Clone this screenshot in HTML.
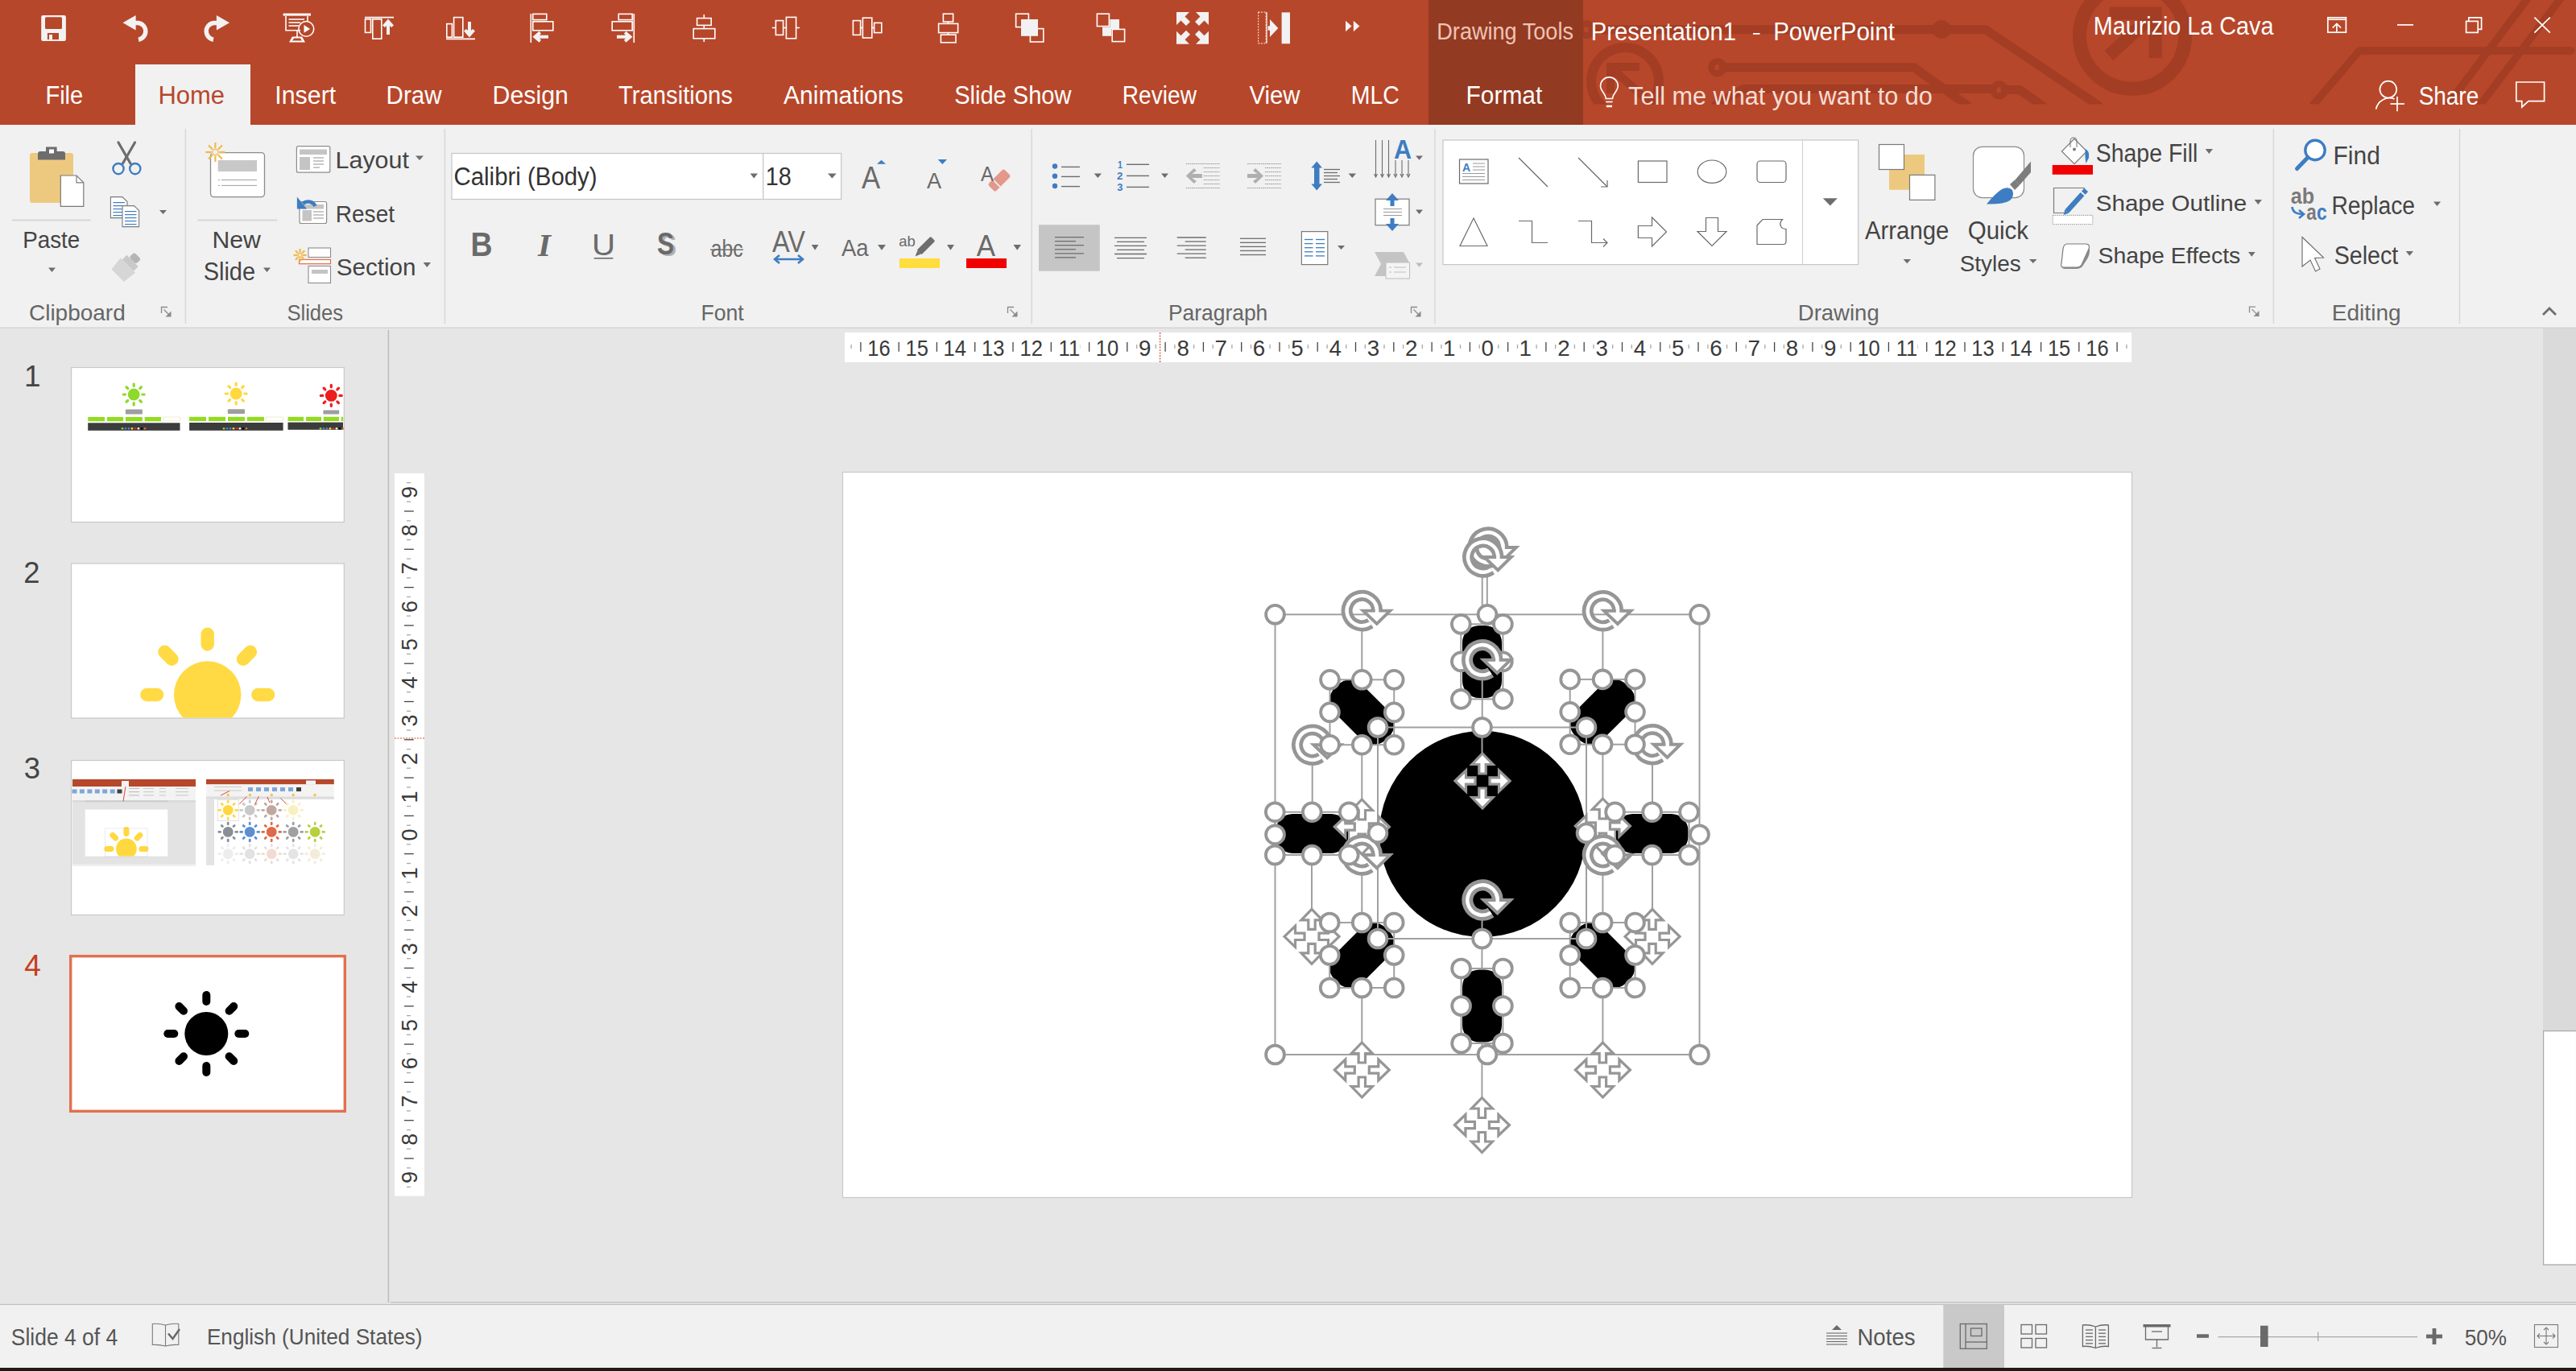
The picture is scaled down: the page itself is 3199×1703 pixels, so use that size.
<!DOCTYPE html>
<html><head><meta charset="utf-8"><style>
html,body{margin:0;padding:0;width:3199px;height:1703px;overflow:hidden;background:#E6E6E6;}
svg{display:block;font-family:"Liberation Sans",sans-serif;}
</style></head><body>
<svg width="3199" height="1703" viewBox="0 0 3199 1703">
<rect x="0" y="0" width="3199" height="1703" fill="#E6E6E6"/>
<rect x="0" y="0" width="3199" height="155" fill="#B7472A"/>
<rect x="1774" y="0" width="192" height="155" fill="#933A22"/>
<rect x="0" y="155" width="3199" height="252" fill="#F1F1F1"/>
<rect x="0" y="406.5" width="3199" height="1.5" fill="#D4D4D4"/>
<rect x="168" y="80" width="143" height="76" fill="#F1F1F1"/>
<rect x="485" y="1617" width="2714" height="1.2" fill="#BDBDBD"/>
<rect x="0" y="1619.8" width="3199" height="1.3" fill="#C0C0C0"/>
<rect x="0" y="1621" width="3199" height="79" fill="#F1F1F1"/>
<rect x="0" y="1699" width="3199" height="4" fill="#1E1B17"/>
<rect x="481.6" y="410" width="1.6" height="1208" fill="#BDBDBD"/>
<defs><clipPath id="tbclip"><rect x="1966" y="0" width="1233" height="129.5"/></clipPath></defs>
<g clip-path="url(#tbclip)" fill="none" stroke="#A33D24" stroke-width="11" stroke-linejoin="round" stroke-linecap="round">
<circle cx="2018" cy="101" r="42" stroke-width="12"/>
<polyline points="2036,83 2000,83 2000,116" stroke-width="10" stroke-linejoin="miter" stroke-linecap="butt"/>
<line x1="2004" y1="87" x2="2052" y2="130" stroke-width="10"/>
<polyline points="1978,36.7 2466,36.7 2606,131"/>
<circle cx="1970" cy="36.7" r="7.5" stroke-width="8"/>
<circle cx="2411" cy="36.4" r="7.5" stroke-width="8"/>
<polyline points="2140,83.7 2376.7,83.7 2443,131"/>
<circle cx="2132.8" cy="83.7" r="7.5" stroke-width="8"/>
<polyline points="2130,131 2165,110.5 2474,110.5"/>
<polyline points="2490,111.5 2508,111.5 2536,131"/>
<circle cx="2482.8" cy="111.8" r="7.5" stroke-width="8"/>
<circle cx="2648" cy="44.8" r="65.5" stroke-width="17"/>
<polyline points="2619.7,16.4 2676.7,16.4 2676.7,72.2" stroke-width="16" stroke-linejoin="miter" stroke-linecap="butt"/>
<line x1="2619" y1="69" x2="2670" y2="22" stroke-width="16" stroke-linecap="butt"/>
<polyline points="3193,63 2930,63 2872,131" stroke-width="9.5"/>
<line x1="3139" y1="-2" x2="3039" y2="131" stroke-width="9.5"/><line x1="3180" y1="-2" x2="3079.6" y2="131" stroke-width="9.5"/>
</g>
<g fill="none" stroke="#FFFFFF" stroke-width="1.6">
<line x1="453" y1="21.6" x2="489" y2="21.6"/>
<rect x="453.5" y="23.8" width="7" height="16.6"/><rect x="462.8" y="23.8" width="11" height="24.4"/>
<line x1="554" y1="48.4" x2="590" y2="48.4"/>
<rect x="554.8" y="29.6" width="6.6" height="16.6"/><rect x="563.6" y="21.6" width="11.2" height="24.6"/>
<line x1="659.3" y1="17" x2="659.3" y2="53"/>
<rect x="661.8" y="17.4" width="17" height="7.2"/><rect x="661.8" y="26.8" width="25" height="11"/>
<line x1="787.3" y1="17" x2="787.3" y2="53"/>
<rect x="768.2" y="17.4" width="17" height="7.2"/><rect x="760.2" y="26.8" width="25" height="11"/>
<line x1="874.3" y1="18" x2="874.3" y2="52"/>
<rect x="865.6" y="22.6" width="17.6" height="8.8" fill="#B7472A"/><rect x="861.2" y="35.6" width="26.6" height="12.2" fill="#B7472A"/>
<line x1="958.8" y1="34.5" x2="993" y2="34.5"/>
<rect x="963.4" y="25.6" width="9.2" height="17.8" fill="#B7472A"/><rect x="976.4" y="21.4" width="12.2" height="26.4" fill="#B7472A"/>
<line x1="1068.6" y1="34.5" x2="1071.2" y2="34.5"/><line x1="1083" y1="34.5" x2="1085.5" y2="34.5"/>
<rect x="1059.4" y="25.6" width="9.2" height="17.8"/><rect x="1071.4" y="22.2" width="11.4" height="24.8"/><rect x="1085.6" y="28.4" width="9.2" height="12.2"/>
<line x1="1177.5" y1="27" x2="1177.5" y2="29.3"/><line x1="1177.5" y1="40.7" x2="1177.5" y2="43"/>
<rect x="1171.4" y="17.2" width="12.2" height="9.8"/><rect x="1165.6" y="29.4" width="24" height="11.2"/><rect x="1168.4" y="43.2" width="18.6" height="9.6"/>
<rect x="1261.6" y="17.2" width="15.8" height="16.4"/><rect x="1279.4" y="35.6" width="16.4" height="16.4"/>
</g>
<rect x="1268" y="24" width="21" height="20.8" fill="#F2F2F2"/>
<g fill="none" stroke="#FFFFFF" stroke-width="1.6"><rect x="1362.4" y="17.2" width="15" height="15.4"/><rect x="1381.2" y="36.4" width="15.4" height="15.2"/></g>
<rect x="1378.4" y="24" width="11.6" height="12.2" fill="#F2F2F2"/><rect x="1369" y="33.6" width="11" height="11.2" fill="#F2F2F2"/>
<g fill="#F2F2F2">
<polygon points="482,23.4 489,31.5 486,34 484,32 484,43 480,43 480,32 478,34 475,31.5"/>
<polygon points="582.9,46.6 590,38.5 587,36 585,38 585,27 581,27 581,38 579,36 576,38.5"/>
<polygon points="661.4,45.7 669.5,38.7 672,41.7 670,43.7 681,43.7 681,47.7 670,47.7 672,49.7 669.5,52.7"/>
<polygon points="785.5,45.7 777.4,38.7 774.9,41.7 776.9,43.7 766,43.7 766,47.7 776.9,47.7 774.9,49.7 777.4,52.7"/>
<polygon points="1461,15 1477,15 1471.5,20.5 1478,27 1473,32 1466.5,25.5 1461,31"/>
<polygon points="1501,15 1485,15 1490.5,20.5 1484,27 1489,32 1495.5,25.5 1501,31"/>
<polygon points="1461,54.8 1477,54.8 1471.5,49.3 1478,42.8 1473,37.8 1466.5,44.3 1461,38.8"/>
<polygon points="1501,54.8 1485,54.8 1490.5,49.3 1484,42.8 1489,37.8 1495.5,44.3 1501,38.8"/>
<rect x="1591.6" y="15.4" width="10.4" height="38.9"/>
<polygon points="1577,24.1 1587.3,35 1577,45.9 1577,37.7 1574.6,37.7 1574.6,32.3 1577,32.3"/>
<polygon points="1671,25.8 1678.6,32.5 1671,39.3"/><polygon points="1680.8,25.8 1688.4,32.5 1680.8,39.3"/>
</g>
<g fill="none" stroke="#FFFFFF" stroke-width="1.2"><rect x="1562.6" y="15.2" width="9.6" height="38.6" stroke-dasharray="2 1.5" stroke="#F5D0C4"/><line x1="1573" y1="15" x2="1573" y2="54"/></g>
<rect x="51.2" y="19" width="30.7" height="32" rx="2.2" fill="#F2F2F2"/>
<rect x="56" y="21.2" width="21" height="14.7" rx="1.5" fill="#B7472A"/>
<rect x="58.9" y="41" width="14.1" height="8.1" fill="#B7472A"/><rect x="61" y="43" width="4" height="6.1" fill="#F2F2F2"/>
<g fill="none" stroke="#F2F2F2" stroke-width="5.5">
<path d="M158 28.4 H171.5 A10.5 10.5 0 0 1 172 49.2"/>
<path d="M279 28.4 H265.5 A10.5 10.5 0 0 0 265 49.2"/>
</g>
<g fill="#F2F2F2"><polygon points="152.5,28.3 168.6,19 168.6,37.6"/><polygon points="285,28.3 268.9,19 268.9,37.6"/></g>
<g fill="none" stroke="#FFFFFF" stroke-width="1.6">
<rect x="351.6" y="16.6" width="34.4" height="3" fill="#FFFFFF" stroke="none"/>
<polyline points="355,20 355,37.8 373,37.8"/><line x1="382" y1="20" x2="382" y2="26"/>
<line x1="358.5" y1="24" x2="378" y2="24"/><line x1="358.5" y1="28" x2="373" y2="28"/><line x1="358.5" y1="32" x2="371" y2="32"/>
<circle cx="380.3" cy="35.9" r="9.4"/>
<line x1="369" y1="38" x2="369" y2="46"/>
</g>
<polygon points="377.5,31 385,35.9 377.5,40.8" fill="#FFFFFF"/>
<polygon points="363,45.6 375,45.6 379,52.6 359,52.6" fill="#FFFFFF"/><polygon points="365,47.5 373,47.5 375,50.6 363,50.6" fill="#B7472A"/>
<g fill="none" stroke="#FFFFFF" stroke-width="1.7">
<rect x="2890.8" y="21.8" width="22.6" height="18.4"/><line x1="2890.8" y1="24.2" x2="2913.4" y2="24.2"/>
<line x1="2901.9" y1="29.8" x2="2901.9" y2="39.5"/><polyline points="2896.7,34.6 2901.9,29.5 2907.1,34.6"/>
<line x1="2977" y1="30.9" x2="2997" y2="30.9"/>
<rect x="3062.6" y="26.4" width="14.6" height="14"/><polyline points="3065.8,26.4 3065.8,21.8 3081.6,21.8 3081.6,36.4 3077.2,36.4"/>
<line x1="3147.4" y1="21.6" x2="3166.8" y2="40.6"/><line x1="3166.8" y1="21.6" x2="3147.4" y2="40.6"/>
<circle cx="2965.8" cy="111.1" r="10.4"/><path d="M2950.6 135.6 A17 17 0 0 1 2973.6 123"/>
<line x1="2968.5" y1="129" x2="2985.9" y2="129"/><line x1="2977" y1="119.9" x2="2977" y2="138.2"/>
<path d="M3124.8 102 H3159.6 V125.6 H3140 L3131.8 133 V125.6 H3124.8 Z"/>
</g>
<g fill="none" stroke="#FFFFFF" stroke-width="1.6">
<path d="M1994.2 122.5 C1994.2 116.5 1987.5 113 1987.5 106.8 A10.9 10.9 0 0 1 2009.3 106.8 C2009.3 113 2002.6 116.5 2002.6 122.5 Z"/>
<line x1="1994.2" y1="126.5" x2="2002.6" y2="126.5"/><line x1="1994.8" y1="132" x2="2002" y2="132" stroke-width="2.4"/>
</g>
<line x1="230.4" y1="160" x2="230.4" y2="402" stroke="#D8D8D8" stroke-width="1.5"/>
<line x1="552.4" y1="160" x2="552.4" y2="402" stroke="#D8D8D8" stroke-width="1.5"/>
<line x1="1281.2" y1="160" x2="1281.2" y2="402" stroke="#D8D8D8" stroke-width="1.5"/>
<line x1="1782" y1="160" x2="1782" y2="402" stroke="#D8D8D8" stroke-width="1.5"/>
<line x1="2823.4" y1="160" x2="2823.4" y2="402" stroke="#D8D8D8" stroke-width="1.5"/>
<line x1="3054.5" y1="160" x2="3054.5" y2="402" stroke="#D8D8D8" stroke-width="1.5"/>
<rect x="37" y="190" width="54" height="62" rx="3" fill="#EDC97F"/>
<path d="M47 198.5 V191 Q47 188 50 188 H57 V182.5 H70.6 V188 H78 Q81 188 81 191 V198.5 Z" fill="#6D6D6D"/>
<rect x="61" y="185.5" width="6" height="5" fill="#FFFFFF"/>
<path d="M75.3 218 H95 L103.8 226.8 V256.3 H75.3 Z" fill="#FFFFFF" stroke="#7A7A7A" stroke-width="1.2"/>
<polyline points="95,218 95,226.8 103.8,226.8" fill="none" stroke="#7A7A7A" stroke-width="1.2"/>
<line x1="15" y1="273.5" x2="112.6" y2="273.5" stroke="#D0D0D0" stroke-width="1.5"/>
<line x1="245.6" y1="273.5" x2="344" y2="273.5" stroke="#D0D0D0" stroke-width="1.5"/>
<polygon points="60,332.6 69,332.6 64.5,338" fill="#6D6D6D"/>
<g stroke="#6D6D6D" stroke-width="3.2" stroke-linecap="round"><line x1="147" y1="177" x2="162" y2="203"/><line x1="167.5" y1="177" x2="152.5" y2="203"/></g>
<g fill="none" stroke="#3E7DC1" stroke-width="2.4"><circle cx="147" cy="209.6" r="6.6"/><circle cx="167.8" cy="209.6" r="6.6"/></g>
<path d="M137.4 244.6 H151.9 L158.0 250.6 V270.6 H137.4 Z" fill="#FFFFFF" stroke="#7A7A7A" stroke-width="1.1"/>
<line x1="140.4" y1="251.6" x2="154.9" y2="251.6" stroke="#3E7DC1" stroke-width="1.2"/>
<line x1="140.4" y1="255.6" x2="154.9" y2="255.6" stroke="#3E7DC1" stroke-width="1.2"/>
<line x1="140.4" y1="259.6" x2="154.9" y2="259.6" stroke="#3E7DC1" stroke-width="1.2"/>
<line x1="140.4" y1="263.6" x2="154.9" y2="263.6" stroke="#3E7DC1" stroke-width="1.2"/>
<line x1="140.4" y1="267.6" x2="154.9" y2="267.6" stroke="#3E7DC1" stroke-width="1.2"/>
<path d="M152 255.6 H166.5 L172.6 261.6 V281.6 H152 Z" fill="#FFFFFF" stroke="#7A7A7A" stroke-width="1.1"/>
<line x1="155" y1="262.6" x2="169.5" y2="262.6" stroke="#3E7DC1" stroke-width="1.2"/>
<line x1="155" y1="266.6" x2="169.5" y2="266.6" stroke="#3E7DC1" stroke-width="1.2"/>
<line x1="155" y1="270.6" x2="169.5" y2="270.6" stroke="#3E7DC1" stroke-width="1.2"/>
<line x1="155" y1="274.6" x2="169.5" y2="274.6" stroke="#3E7DC1" stroke-width="1.2"/>
<line x1="155" y1="278.6" x2="169.5" y2="278.6" stroke="#3E7DC1" stroke-width="1.2"/>
<polygon points="198,261 207,261 202.5,266" fill="#6D6D6D"/>
<g transform="translate(157.5,331) rotate(45)"><rect x="-6" y="-19" width="12" height="9" rx="3" fill="#B5B5B5"/><rect x="-10" y="-10" width="20" height="8" fill="#C9C9C9"/><path d="M-13 -2 H13 L11 16 H-11 Z" fill="#D6D6D6"/></g>
<g fill="none" stroke="#8A8A8A" stroke-width="1.3"><polyline points="200.5,389 200.5,381.5 208,381.5"/><line x1="203.5" y1="384.5" x2="211" y2="392"/></g><polygon points="212.5,386.5 212.5,393.5 205.5,393.5" fill="#8A8A8A"/>
<rect x="261.5" y="189.6" width="67" height="55" rx="4" fill="#FFFFFF" stroke="#8C8C8C" stroke-width="1.3"/>
<rect x="270.7" y="199" width="48.3" height="14" fill="#C8C8C8"/>
<g stroke="#A0A0A0" stroke-width="1"><line x1="275" y1="223.5" x2="319" y2="223.5"/><line x1="275" y1="230.4" x2="319" y2="230.4"/><line x1="271" y1="223.5" x2="273" y2="223.5"/><line x1="271" y1="230.4" x2="273" y2="230.4"/></g>
<g stroke="#F0B94A" stroke-width="2.2"><line x1="255.4" y1="189.0" x2="279.4" y2="189.0"/><line x1="258.9" y1="180.5" x2="275.9" y2="197.5"/><line x1="267.4" y1="177.0" x2="267.4" y2="201.0"/><line x1="275.9" y1="180.5" x2="258.9" y2="197.5"/></g><circle cx="267.4" cy="189" r="5.0" fill="#F1F1F1"/><circle cx="267.4" cy="189" r="3.6" fill="none" stroke="#F0B94A" stroke-width="1.2"/>
<polygon points="327,332.6 336,332.6 331.5,338" fill="#6D6D6D"/>
<rect x="368.4" y="181.6" width="41.4" height="32.6" rx="2" fill="#FFFFFF" stroke="#8C8C8C" stroke-width="1.2"/>
<rect x="372" y="185.5" width="34" height="6.5" fill="#C4C4C4"/><rect x="372" y="195" width="13" height="16" fill="#C4C4C4"/>
<g stroke="#909090" stroke-width="1"><line x1="389" y1="196" x2="402" y2="196"/><line x1="389" y1="200" x2="402" y2="200"/><line x1="389" y1="204" x2="402" y2="204"/><line x1="389" y1="208" x2="397" y2="208"/></g>
<polygon points="516,193.5 526,193.5 521.0,199" fill="#6D6D6D"/>
<rect x="372" y="250.5" width="33.6" height="27" rx="2" fill="#FFFFFF" stroke="#8C8C8C" stroke-width="1.2"/>
<rect x="376" y="254" width="26" height="5.5" fill="#C4C4C4"/><rect x="375.5" y="261" width="11.5" height="13.5" fill="#C4C4C4"/>
<g stroke="#909090" stroke-width="1"><line x1="389" y1="263" x2="402" y2="263"/><line x1="389" y1="267" x2="402" y2="267"/><line x1="389" y1="271" x2="402" y2="271"/></g>
<path d="M376 253 A9.5 8.5 0 0 1 391.5 256" fill="none" stroke="#3E7DC1" stroke-width="4.6"/>
<polygon points="368.9,244.6 368.9,259.6 381,259.6" fill="#3E7DC1"/>
<rect x="383" y="308" width="27.5" height="11.5" fill="#FFFFFF" stroke="#8C8C8C" stroke-width="1.1"/>
<rect x="371.5" y="322.5" width="39" height="5.2" fill="#FFFFFF" stroke="#E46C4A" stroke-width="1.2"/>
<rect x="383" y="330.5" width="27.5" height="21" fill="#FFFFFF" stroke="#8C8C8C" stroke-width="1.1"/>
<rect x="387" y="335" width="20" height="5" fill="#C4C4C4"/>
<g stroke="#F0B94A" stroke-width="2.2"><line x1="364.6" y1="317.0" x2="380.6" y2="317.0"/><line x1="366.9" y1="311.3" x2="378.3" y2="322.7"/><line x1="372.6" y1="309.0" x2="372.6" y2="325.0"/><line x1="378.3" y1="311.3" x2="366.9" y2="322.7"/></g><circle cx="372.6" cy="317" r="3.4" fill="#F1F1F1"/><circle cx="372.6" cy="317" r="2.4" fill="none" stroke="#F0B94A" stroke-width="1.2"/>
<polygon points="525.6,326 535,326 530.3,332" fill="#6D6D6D"/>
<rect x="561" y="190.5" width="387" height="57" fill="#FFFFFF" stroke="#C6C6C6" stroke-width="1.2"/>
<rect x="947.8" y="190.5" width="96.8" height="57" fill="#FFFFFF" stroke="#C6C6C6" stroke-width="1.2"/>
<polygon points="931.6,215.5 941,215.5 936.3,221.4" fill="#6D6D6D"/>
<polygon points="1028,215.5 1038.7,215.5 1033.35,221.4" fill="#6D6D6D"/>
<polygon points="1089,203.7 1100,203.7 1094.5,198.7" fill="#3E7DC1"/>
<polygon points="1164.7,198 1176,198 1170.35,204" fill="#3E7DC1"/>
<polygon points="1007.7,304 1016.5,304 1012.1,310.8" fill="#6D6D6D"/>
<polygon points="1090,304 1100,304 1095.0,310.8" fill="#6D6D6D"/>
<polygon points="1176,304 1185,304 1180.5,310.8" fill="#6D6D6D"/>
<polygon points="1258.5,304 1268,304 1263.25,310.8" fill="#6D6D6D"/>
<rect x="1117" y="321" width="50" height="12" fill="#FFDD3C"/>
<rect x="1200" y="321" width="50" height="12" fill="#F00000"/>
<g fill="none" stroke="#8A8A8A" stroke-width="1.3"><polyline points="1251.5,389 1251.5,381.5 1259,381.5"/><line x1="1254.5" y1="384.5" x2="1262" y2="392"/></g><polygon points="1263.5,386.5 1263.5,393.5 1256.5,393.5" fill="#8A8A8A"/>
<g transform="translate(1241,224) rotate(-45)"><rect x="-14" y="-6.5" width="28" height="13" rx="2.5" fill="#E3988A"/><line x1="-5" y1="-6.5" x2="-5" y2="6.5" stroke="#F1F1F1" stroke-width="1.6"/></g>
<g fill="none" stroke="#3E7DC1" stroke-width="2.6"><line x1="963" y1="322" x2="996" y2="322"/><polyline points="968,317 962,322 968,327"/><polyline points="991,317 997,322 991,327"/></g>
<g transform="translate(1150,305) rotate(-45)"><rect x="-12" y="-4" width="24" height="8" rx="1.5" fill="#6D6D6D"/><polygon points="-12,-3 -19,0 -12,3" fill="#6D6D6D"/></g>
<g fill="#3E7DC1"><circle cx="1310" cy="206.5" r="3.2"/><circle cx="1310" cy="218.8" r="3.2"/><circle cx="1310" cy="231" r="3.2"/></g>
<g stroke="#6D6D6D" stroke-width="1.4"><line x1="1318" y1="207.4" x2="1341" y2="207.4"/><line x1="1318" y1="219.4" x2="1341" y2="219.4"/><line x1="1318" y1="231.6" x2="1341" y2="231.6"/><line x1="1399" y1="204.3" x2="1427" y2="204.3"/><line x1="1399" y1="218.4" x2="1427" y2="218.4"/><line x1="1399" y1="232.4" x2="1427" y2="232.4"/></g>
<polygon points="1358.7,215.6 1368,215.6 1363.35,221" fill="#6D6D6D"/>
<polygon points="1442,215.6 1451,215.6 1446.5,221" fill="#6D6D6D"/>
<g stroke="#9A9A9A" stroke-width="1" stroke-dasharray="1.6 0.8">
<line x1="1472.8" y1="203.5" x2="1514.8" y2="203.5"/><line x1="1472.8" y1="233.5" x2="1514.8" y2="233.5"/>
<line x1="1494.8" y1="208.5" x2="1514.8" y2="208.5"/>
<line x1="1494.8" y1="213.5" x2="1514.8" y2="213.5"/>
<line x1="1494.8" y1="218.5" x2="1514.8" y2="218.5"/>
<line x1="1494.8" y1="223.5" x2="1514.8" y2="223.5"/>
<line x1="1494.8" y1="228.5" x2="1514.8" y2="228.5"/>
</g>
<polygon points="1472.8,218.5 1482.8,209 1485.8,212 1480.3,216 1492.8,216 1492.8,221 1480.3,221 1485.8,225 1482.8,228" fill="#AFAFAF"/>
<g stroke="#9A9A9A" stroke-width="1" stroke-dasharray="1.6 0.8">
<line x1="1549" y1="203.5" x2="1591" y2="203.5"/><line x1="1549" y1="233.5" x2="1591" y2="233.5"/>
<line x1="1571" y1="208.5" x2="1591" y2="208.5"/>
<line x1="1571" y1="213.5" x2="1591" y2="213.5"/>
<line x1="1571" y1="218.5" x2="1591" y2="218.5"/>
<line x1="1571" y1="223.5" x2="1591" y2="223.5"/>
<line x1="1571" y1="228.5" x2="1591" y2="228.5"/>
</g>
<polygon points="1569,218.5 1559,209 1556,212 1561.5,216 1549,216 1549,221 1561.5,221 1556,225 1559,228" fill="#AFAFAF"/>
<g fill="#3E7DC1"><polygon points="1635.2,200.5 1642,208.5 1638.5,208.5 1638.5,228.5 1642,228.5 1635.2,236.5 1628.4,228.5 1632,228.5 1632,208.5 1628.4,208.5"/></g>
<g stroke="#6D6D6D" stroke-width="1.3"><line x1="1644" y1="210.5" x2="1664" y2="210.5"/><line x1="1644" y1="214.5" x2="1661" y2="214.5"/><line x1="1644" y1="218.5" x2="1664" y2="218.5"/><line x1="1644" y1="222.5" x2="1661" y2="222.5"/><line x1="1644" y1="226.5" x2="1664" y2="226.5"/></g>
<polygon points="1674.6,215.6 1684,215.6 1679.3,221" fill="#6D6D6D"/>
<g stroke="#6D6D6D" stroke-width="1.1" fill="none">
<line x1="1708.5" y1="174" x2="1708.5" y2="219"/><polyline points="1706.5,216 1708.5,220 1710.5,216"/>
<line x1="1716.5" y1="174" x2="1716.5" y2="219"/><polyline points="1714.5,216 1716.5,220 1718.5,216"/>
<line x1="1724.5" y1="174" x2="1724.5" y2="219"/><polyline points="1722.5,216 1724.5,220 1726.5,216"/>
<line x1="1733" y1="199" x2="1733" y2="219"/><polyline points="1731,216 1733,220 1735,216"/>
<line x1="1741" y1="199" x2="1741" y2="219"/><polyline points="1739,216 1741,220 1743,216"/>
<line x1="1749" y1="199" x2="1749" y2="219"/><polyline points="1747,216 1749,220 1751,216"/>
</g>
<polygon points="1758,193.4 1767,193.4 1762.5,198.8" fill="#6D6D6D"/>
<rect x="1708" y="247.2" width="42" height="32.5" fill="#FFFFFF" stroke="#7A7A7A" stroke-width="1.2"/>
<g stroke="#9A9A9A" stroke-width="1"><line x1="1718" y1="259.5" x2="1741" y2="259.5"/><line x1="1718" y1="263.5" x2="1741" y2="263.5"/><line x1="1718" y1="267.5" x2="1741" y2="267.5"/></g>
<g fill="#3E7DC1"><polygon points="1729,240 1737,249 1731.5,249 1731.5,256 1726.5,256 1726.5,249 1721,249"/><polygon points="1729,287 1737,278 1731.5,278 1731.5,271 1726.5,271 1726.5,278 1721,278"/></g>
<polygon points="1758,260.6 1767,260.6 1762.5,266" fill="#6D6D6D"/>
<rect x="1290" y="279.2" width="75.8" height="57.5" fill="#C5C5C5"/>
<g stroke="#6D6D6D" stroke-width="1.3">
<line x1="1310" y1="294.6" x2="1346" y2="294.6"/><line x1="1310" y1="299.65000000000003" x2="1336" y2="299.65000000000003"/><line x1="1310" y1="304.70000000000005" x2="1346" y2="304.70000000000005"/><line x1="1310" y1="309.75" x2="1336" y2="309.75"/><line x1="1310" y1="314.8" x2="1346" y2="314.8"/><line x1="1310" y1="319.85" x2="1336" y2="319.85"/>
<line x1="1384" y1="295.3" x2="1424" y2="295.3"/><line x1="1387" y1="300.35" x2="1421" y2="300.35"/><line x1="1384" y1="305.40000000000003" x2="1424" y2="305.40000000000003"/><line x1="1387" y1="310.45" x2="1421" y2="310.45"/><line x1="1384" y1="315.5" x2="1424" y2="315.5"/><line x1="1387" y1="320.55" x2="1421" y2="320.55"/>
<line x1="1461.7" y1="295.0" x2="1497.7" y2="295.0"/><line x1="1471.7" y1="300.05" x2="1497.7" y2="300.05"/><line x1="1461.7" y1="305.1" x2="1497.7" y2="305.1"/><line x1="1471.7" y1="310.15" x2="1497.7" y2="310.15"/><line x1="1461.7" y1="315.2" x2="1497.7" y2="315.2"/><line x1="1471.7" y1="320.25" x2="1497.7" y2="320.25"/>
<line x1="1540" y1="296.3" x2="1572" y2="296.3"/><line x1="1540" y1="301.35" x2="1572" y2="301.35"/><line x1="1540" y1="306.40000000000003" x2="1572" y2="306.40000000000003"/><line x1="1540" y1="311.45" x2="1572" y2="311.45"/><line x1="1540" y1="316.5" x2="1572" y2="316.5"/>
</g>
<rect x="1616.4" y="287.6" width="32.4" height="41" fill="#FFFFFF" stroke="#7A7A7A" stroke-width="1.2"/>
<g stroke="#3E7DC1" stroke-width="1.3">
<line x1="1620" y1="297.5" x2="1630.5" y2="297.5"/><line x1="1634" y1="297.5" x2="1645" y2="297.5"/>
<line x1="1620" y1="302.6" x2="1630.5" y2="302.6"/><line x1="1634" y1="302.6" x2="1645" y2="302.6"/>
<line x1="1620" y1="307.7" x2="1630.5" y2="307.7"/><line x1="1634" y1="307.7" x2="1645" y2="307.7"/>
<line x1="1620" y1="312.8" x2="1630.5" y2="312.8"/><line x1="1634" y1="312.8" x2="1645" y2="312.8"/>
<line x1="1620" y1="317.9" x2="1630.5" y2="317.9"/><line x1="1634" y1="317.9" x2="1645" y2="317.9"/>
</g>
<polygon points="1661,305 1670,305 1665.5,310" fill="#6D6D6D"/>
<polygon points="1707,313 1743,313 1751,328 1743,343 1707,343 1715,328" fill="#C4C4C4"/>
<rect x="1721" y="326" width="29.5" height="20" fill="#F4F4F4" stroke="#BDBDBD" stroke-width="1"/>
<g stroke="#C0C0C0" stroke-width="1"><line x1="1725" y1="332" x2="1728" y2="332"/><line x1="1731" y1="332" x2="1746" y2="332"/><line x1="1725" y1="338" x2="1728" y2="338"/><line x1="1731" y1="338" x2="1746" y2="338"/></g>
<polygon points="1758,326.6 1767,326.6 1762.5,331.7" fill="#BDBDBD"/>
<g fill="none" stroke="#8A8A8A" stroke-width="1.3"><polyline points="1752.5,389 1752.5,381.5 1760,381.5"/><line x1="1755.5" y1="384.5" x2="1763" y2="392"/></g><polygon points="1764.5,386.5 1764.5,393.5 1757.5,393.5" fill="#8A8A8A"/>
<rect x="1792" y="174" width="515.6" height="154.6" fill="#FFFFFF" stroke="#C6C6C6" stroke-width="1.2"/>
<line x1="2238.5" y1="174" x2="2238.5" y2="328.6" stroke="#D4D4D4" stroke-width="1.2"/>
<polygon points="2263.8,246.3 2281.8,246.3 2272.8,255.4" fill="#6D6D6D"/>
<g fill="none" stroke="#6A6A6A" stroke-width="1.2">
<rect x="1812.5" y="198" width="35.5" height="30"/>
<line x1="1886" y1="196" x2="1922" y2="232"/>
<line x1="1960" y1="196" x2="1996" y2="232"/><polyline points="1988,232 1996,232 1996,224"/>
<rect x="2034.4" y="200" width="35.6" height="26.5"/>
<ellipse cx="2126" cy="213.2" rx="17.8" ry="14.2"/>
<rect x="2182" y="200" width="36" height="26.5" rx="4"/>
<polygon points="1830,271 1847,305.5 1813,305.5"/>
<polyline points="1886,274.5 1902.5,274.5 1902.5,301.5 1922,301.5"/>
<polyline points="1960,274.5 1976.5,274.5 1976.5,301.5 1996,301.5"/><polyline points="1991,296.5 1996,301.5 1991,306.5"/>
<polygon points="2034.4,280.5 2051.5,280.5 2051.5,270 2069.5,288 2051.5,306 2051.5,295.5 2034.4,295.5"/>
<polygon points="2118.5,270.5 2133.5,270.5 2133.5,287.5 2144,287.5 2126,305.5 2108,287.5 2118.5,287.5"/>
<path d="M2182 280 L2189 272.5 H2213.5 Q2209 277 2212 282 Q2214 284.5 2218 284.5 V300 Q2218 303.5 2214.5 303.5 H2182 Z"/>
</g>
<g stroke="#9A9A9A" stroke-width="1"><line x1="1829" y1="203" x2="1844" y2="203"/><line x1="1829" y1="207" x2="1844" y2="207"/><line x1="1829" y1="211" x2="1844" y2="211"/><line x1="1816" y1="215.5" x2="1844" y2="215.5"/><line x1="1816" y1="219.5" x2="1844" y2="219.5"/><line x1="1816" y1="223.5" x2="1844" y2="223.5"/></g>
<text x="1816" y="213" font-size="14" font-weight="bold" fill="#3E7DC1">A</text>
<g fill="none" stroke="#8A8A8A" stroke-width="1.3"><polyline points="2793.5,388.6 2793.5,381.1 2801,381.1"/><line x1="2796.5" y1="384.1" x2="2804" y2="391.6"/></g><polygon points="2805.5,386.1 2805.5,393.1 2798.5,393.1" fill="#8A8A8A"/>
<rect x="2346" y="192" width="44" height="43.8" fill="#EDC97F"/>
<rect x="2333.5" y="179.5" width="31" height="31" fill="#FFFFFF" stroke="#7A7A7A" stroke-width="1.2"/>
<rect x="2371.5" y="217.4" width="31.4" height="31" fill="#FFFFFF" stroke="#7A7A7A" stroke-width="1.2"/>
<polygon points="2363.6,321.9 2373,321.9 2368.3,327.2" fill="#6D6D6D"/>
<rect x="2450.5" y="182.3" width="63" height="63.3" rx="11" fill="#FFFFFF" stroke="#8C8C8C" stroke-width="1.2"/>
<polygon points="2502,224 2522,200.5 2522,214 2508,230" fill="#7D7D7D"/><polygon points="2496,229 2502,223.5 2508,230 2502,236" fill="#7D7D7D"/>
<path d="M2467 253.5 Q2478 240 2486 235 Q2494 231 2499 236 Q2502 244 2496 249 Q2488 254 2467 253.5 Z" fill="#3E7DC1"/>
<polygon points="2520,322 2529.5,322 2524.75,327" fill="#6D6D6D"/>
<g transform="translate(2576,188) rotate(45)"><rect x="-11" y="-11" width="22" height="22" fill="#FFFFFF" stroke="#7A7A7A" stroke-width="1.2"/></g>
<path d="M2571 183 V175 A4 4 0 0 1 2579 175 V183" fill="none" stroke="#7A7A7A" stroke-width="1.1"/><circle cx="2576" cy="185.5" r="2" fill="#7A7A7A"/>
<path d="M2589.5 185 Q2595 187 2594 196 L2590.5 203 Q2589 196 2589.5 185 Z" fill="#3E7DC1"/>
<rect x="2548.7" y="205" width="50.3" height="11.8" fill="#F00000"/>
<polygon points="2738.7,185 2748,185 2743.35,191" fill="#6D6D6D"/>
<polyline points="2589,233.5 2550.5,233.5 2550.5,264.5 2563,264.5" fill="none" stroke="#7A7A7A" stroke-width="1.2"/>
<g transform="translate(2578,250) rotate(-48)"><rect x="-17" y="-3.2" width="29" height="6.4" fill="#3E7DC1"/><rect x="14" y="-3.2" width="5" height="6.4" fill="#3E7DC1"/><polygon points="-17,-3.2 -23,0 -17,3.2" fill="#3E7DC1"/></g>
<rect x="2549.2" y="267.4" width="49.6" height="11.2" fill="#FFFFFF" stroke="#9A9A9A" stroke-width="1" stroke-dasharray="1.5 1"/>
<polygon points="2799.6,248 2809,248 2804.3,254" fill="#6D6D6D"/>
<path d="M2567 303 H2590 Q2595 303 2594.5 308 L2585 329 Q2583 332 2579 332 H2563 Q2558 332 2560 327 L2562 309 Q2563 303 2567 303 Z" fill="#FFFFFF" stroke="#7A7A7A" stroke-width="1.2"/>
<path d="M2560 327 Q2558 332 2563 332 H2579 Q2583 332 2585 329 L2594.5 308 Q2596 313 2593 320 L2586 331 Q2583 334 2578 334 H2564 Q2559 333.5 2560 327 Z" fill="#8A8A8A"/>
<polygon points="2792,313 2800.6,313 2796.3,318.7" fill="#6D6D6D"/>
<circle cx="2875" cy="186.5" r="12.2" fill="#FFFFFF" stroke="#3E7DC1" stroke-width="3.4"/>
<line x1="2866" y1="195.5" x2="2852.5" y2="209.5" stroke="#3E7DC1" stroke-width="5" stroke-linecap="round"/>
<g fill="none" stroke="#3E7DC1" stroke-width="2.6"><path d="M2846.5 257 Q2847 266 2860 266"/><polyline points="2855,261 2861,266 2855,271"/></g>
<polygon points="3022,250.5 3031,250.5 3026.5,256" fill="#6D6D6D"/>
<polygon points="2859,294.5 2885.5,320 2874.5,320.5 2881,334 2875.5,337 2869,323 2859,331" fill="#FFFFFF" stroke="#6A6A6A" stroke-width="1.1"/>
<polygon points="2987.7,312 2997,312 2992.35,317.8" fill="#6D6D6D"/>
<polyline points="3158,391 3166,383 3174,391" fill="none" stroke="#6D6D6D" stroke-width="2.8"/>
<rect x="88.6" y="456.5" width="338.7" height="192" fill="#FFFFFF" stroke="#C8C8C8" stroke-width="1.2"/>
<rect x="88.6" y="700" width="338.7" height="192" fill="#FFFFFF" stroke="#C8C8C8" stroke-width="1.2"/>
<rect x="88.6" y="944.5" width="338.7" height="192" fill="#FFFFFF" stroke="#C8C8C8" stroke-width="1.2"/>
<rect x="87.7" y="1187.7" width="340.6" height="192.6" fill="#FFFFFF" stroke="#E2704F" stroke-width="3.4"/>
<text x="30.0" y="479.5" font-size="36.96" fill="#444444">1</text>
<text x="29.2" y="723.7" font-size="36.43" fill="#444444">2</text>
<text x="29.7" y="967.4" font-size="36.43" fill="#444444">3</text>
<text x="30.3" y="1211.7" font-size="36.96" fill="#C43E1C">4</text>
<circle cx="166.2" cy="490" r="7.4" fill="#8FD92A"/><line x1="176.8" y1="490.0" x2="179.1" y2="490.0" stroke="#8FD92A" stroke-width="3.2" stroke-linecap="round"/><line x1="173.7" y1="497.5" x2="175.4" y2="499.2" stroke="#8FD92A" stroke-width="3.2" stroke-linecap="round"/><line x1="166.2" y1="500.6" x2="166.2" y2="502.9" stroke="#8FD92A" stroke-width="3.2" stroke-linecap="round"/><line x1="158.7" y1="497.5" x2="157.0" y2="499.2" stroke="#8FD92A" stroke-width="3.2" stroke-linecap="round"/><line x1="155.5" y1="490.0" x2="153.2" y2="490.0" stroke="#8FD92A" stroke-width="3.2" stroke-linecap="round"/><line x1="158.7" y1="482.5" x2="157.0" y2="480.8" stroke="#8FD92A" stroke-width="3.2" stroke-linecap="round"/><line x1="166.2" y1="479.4" x2="166.2" y2="477.1" stroke="#8FD92A" stroke-width="3.2" stroke-linecap="round"/><line x1="173.7" y1="482.5" x2="175.4" y2="480.8" stroke="#8FD92A" stroke-width="3.2" stroke-linecap="round"/>
<circle cx="293.2" cy="489" r="7.4" fill="#FFD83F"/><line x1="303.8" y1="489.0" x2="306.1" y2="489.0" stroke="#FFD83F" stroke-width="3.2" stroke-linecap="round"/><line x1="300.7" y1="496.5" x2="302.4" y2="498.2" stroke="#FFD83F" stroke-width="3.2" stroke-linecap="round"/><line x1="293.2" y1="499.6" x2="293.2" y2="501.9" stroke="#FFD83F" stroke-width="3.2" stroke-linecap="round"/><line x1="285.7" y1="496.5" x2="284.0" y2="498.2" stroke="#FFD83F" stroke-width="3.2" stroke-linecap="round"/><line x1="282.6" y1="489.0" x2="280.2" y2="489.0" stroke="#FFD83F" stroke-width="3.2" stroke-linecap="round"/><line x1="285.7" y1="481.5" x2="284.0" y2="479.8" stroke="#FFD83F" stroke-width="3.2" stroke-linecap="round"/><line x1="293.2" y1="478.4" x2="293.2" y2="476.1" stroke="#FFD83F" stroke-width="3.2" stroke-linecap="round"/><line x1="300.7" y1="481.5" x2="302.4" y2="479.8" stroke="#FFD83F" stroke-width="3.2" stroke-linecap="round"/>
<circle cx="411.3" cy="491.4" r="7.4" fill="#EE1C1C"/><line x1="421.9" y1="491.4" x2="424.2" y2="491.4" stroke="#EE1C1C" stroke-width="3.2" stroke-linecap="round"/><line x1="418.8" y1="498.9" x2="420.5" y2="500.6" stroke="#EE1C1C" stroke-width="3.2" stroke-linecap="round"/><line x1="411.3" y1="502.0" x2="411.3" y2="504.3" stroke="#EE1C1C" stroke-width="3.2" stroke-linecap="round"/><line x1="403.8" y1="498.9" x2="402.1" y2="500.6" stroke="#EE1C1C" stroke-width="3.2" stroke-linecap="round"/><line x1="400.7" y1="491.4" x2="398.4" y2="491.4" stroke="#EE1C1C" stroke-width="3.2" stroke-linecap="round"/><line x1="403.8" y1="483.9" x2="402.1" y2="482.2" stroke="#EE1C1C" stroke-width="3.2" stroke-linecap="round"/><line x1="411.3" y1="480.8" x2="411.3" y2="478.4" stroke="#EE1C1C" stroke-width="3.2" stroke-linecap="round"/><line x1="418.8" y1="483.9" x2="420.5" y2="482.2" stroke="#EE1C1C" stroke-width="3.2" stroke-linecap="round"/>
<rect x="155.9" y="508.6" width="21.0" height="5.799999999999997" rx="1" fill="#9E9E9E"/>
<rect x="282.8" y="508.3" width="21.19999999999999" height="5.700000000000003" rx="1" fill="#9E9E9E"/>
<rect x="401.4" y="509.5" width="19.80000000000001" height="4.899999999999999" rx="1" fill="#9E9E9E"/>
<rect x="109.2" y="518" width="20.8" height="5.299999999999997" fill="#92DC1E"/>
<rect x="132.9" y="518" width="20.199999999999996" height="5.299999999999997" fill="#92DC1E"/>
<rect x="155.9" y="518" width="21.0" height="5.299999999999997" fill="#92DC1E"/>
<rect x="179.7" y="518" width="20.299999999999997" height="5.299999999999997" fill="#92DC1E"/>
<rect x="235.1" y="517.8" width="20.900000000000006" height="5.200000000000003" fill="#92DC1E"/>
<rect x="259" y="517.8" width="21" height="5.200000000000003" fill="#92DC1E"/>
<rect x="283" y="517.8" width="21" height="5.200000000000003" fill="#92DC1E"/>
<rect x="306.9" y="517.8" width="21.099999999999994" height="5.200000000000003" fill="#92DC1E"/>
<rect x="357.5" y="517.8" width="19.5" height="5.200000000000003" fill="#92DC1E"/>
<rect x="379.9" y="517.8" width="19.100000000000023" height="5.200000000000003" fill="#92DC1E"/>
<rect x="401.8" y="517.8" width="19.19999999999999" height="5.200000000000003" fill="#92DC1E"/>
<rect x="423.7" y="517.8" width="2.400000000000034" height="5.200000000000003" fill="#92DC1E"/>
<rect x="202.9" y="518" width="20.599999999999994" height="5" fill="#FFFFFF" stroke="#E8E0B0" stroke-width="0.6"/>
<rect x="330.6" y="518" width="21.00000000000003" height="5" fill="#FFFFFF" stroke="#E8E0B0" stroke-width="0.6"/>
<rect x="109.2" y="525.3" width="114.3" height="9.5" fill="#3C3C3C"/>
<rect x="235.1" y="525" width="116.50000000000003" height="9.799999999999997" fill="#3C3C3C"/>
<rect x="357.5" y="524.6" width="68.5" height="9.200000000000003" fill="#3C3C3C"/>
<circle cx="152" cy="532.3" r="1.3" fill="#8FD92A"/>
<circle cx="156" cy="532.3" r="1.3" fill="#4A86C8"/>
<circle cx="160" cy="532.3" r="1.3" fill="#4A86C8"/>
<circle cx="164" cy="532.3" r="1.3" fill="#FFD83F"/>
<circle cx="168" cy="532.3" r="1.3" fill="#EE1C1C"/>
<circle cx="172" cy="532.3" r="1.3" fill="#FFFFFF"/>
<circle cx="176" cy="532.3" r="1.3" fill="#000000"/>
<circle cx="180" cy="532.3" r="1.3" fill="#E07040"/>
<circle cx="278" cy="532.3" r="1.3" fill="#8FD92A"/>
<circle cx="282" cy="532.3" r="1.3" fill="#4A86C8"/>
<circle cx="286" cy="532.3" r="1.3" fill="#4A86C8"/>
<circle cx="290" cy="532.3" r="1.3" fill="#FFD83F"/>
<circle cx="294" cy="532.3" r="1.3" fill="#EE1C1C"/>
<circle cx="298" cy="532.3" r="1.3" fill="#FFFFFF"/>
<circle cx="302" cy="532.3" r="1.3" fill="#000000"/>
<circle cx="306" cy="532.3" r="1.3" fill="#E07040"/>
<circle cx="398" cy="532.3" r="1.3" fill="#8FD92A"/>
<circle cx="402" cy="532.3" r="1.3" fill="#4A86C8"/>
<circle cx="406" cy="532.3" r="1.3" fill="#4A86C8"/>
<circle cx="410" cy="532.3" r="1.3" fill="#FFD83F"/>
<circle cx="414" cy="532.3" r="1.3" fill="#EE1C1C"/>
<circle cx="418" cy="532.3" r="1.3" fill="#FFFFFF"/>
<circle cx="422" cy="532.3" r="1.3" fill="#000000"/>
<circle cx="426" cy="532.3" r="1.3" fill="#E07040"/>
<defs><clipPath id="th2"><rect x="89" y="700.6" width="338" height="191"/></clipPath><clipPath id="th3a"><rect x="105.7" y="1005.5" width="102.6" height="58.1"/></clipPath></defs>
<g clip-path="url(#th2)">
<circle cx="257.7" cy="863" r="41.7" fill="#FFDA44"/>
<line x1="320.4" y1="863.0" x2="333.0" y2="863.0" stroke="#FFDA44" stroke-width="16.4" stroke-linecap="round"/><line x1="195.0" y1="863.0" x2="182.4" y2="863.0" stroke="#FFDA44" stroke-width="16.4" stroke-linecap="round"/><line x1="213.4" y1="818.7" x2="204.5" y2="809.8" stroke="#FFDA44" stroke-width="16.4" stroke-linecap="round"/><line x1="257.7" y1="800.3" x2="257.7" y2="787.7" stroke="#FFDA44" stroke-width="16.4" stroke-linecap="round"/><line x1="302.0" y1="818.7" x2="310.9" y2="809.8" stroke="#FFDA44" stroke-width="16.4" stroke-linecap="round"/>
</g>
<rect x="90" y="968" width="153" height="107.6" fill="#E3E3E3"/>
<rect x="90" y="968" width="153" height="9" fill="#B7472A"/>
<rect x="90" y="977" width="153" height="17.2" fill="#F3F3F3"/>
<rect x="90" y="994.2" width="153" height="2.2" fill="#D8D8D8"/>
<rect x="90" y="1073.5" width="153" height="2.1" fill="#F0F0F0"/>
<rect x="89.5" y="980.5" width="6" height="5" fill="#7FA7D6"/>
<rect x="98.9" y="980.5" width="6" height="5" fill="#7FA7D6"/>
<rect x="108.4" y="980.5" width="6" height="5" fill="#7FA7D6"/>
<rect x="117.8" y="980.5" width="6" height="5" fill="#7FA7D6"/>
<rect x="127.2" y="980.5" width="6" height="5" fill="#7FA7D6"/>
<rect x="136.7" y="980.5" width="6" height="5" fill="#7FA7D6"/>
<rect x="105.7" y="1005.5" width="102.6" height="58.1" fill="#FFFFFF"/>
<g clip-path="url(#th3a)">
<circle cx="156.9" cy="1054.4" r="12.8" fill="#FFD83F"/>
<line x1="175.9" y1="1054.4" x2="180.9" y2="1054.4" stroke="#FFD83F" stroke-width="7" stroke-linecap="round"/><line x1="137.9" y1="1054.4" x2="132.9" y2="1054.4" stroke="#FFD83F" stroke-width="7" stroke-linecap="round"/><line x1="143.5" y1="1041.0" x2="139.9" y2="1037.4" stroke="#FFD83F" stroke-width="7" stroke-linecap="round"/><line x1="156.9" y1="1035.4" x2="156.9" y2="1030.4" stroke="#FFD83F" stroke-width="7" stroke-linecap="round"/><line x1="170.3" y1="1041.0" x2="173.9" y2="1037.4" stroke="#FFD83F" stroke-width="7" stroke-linecap="round"/>
</g>
<line x1="155.9" y1="977.2" x2="153" y2="995.6" stroke="#E03020" stroke-width="0.9"/>
<rect x="151" y="970" width="9" height="7" fill="#F3F3F3"/>
<line x1="160" y1="979.4" x2="173" y2="979.4" stroke="#A8A8A8" stroke-width="0.8"/>
<line x1="178" y1="979.4" x2="191" y2="979.4" stroke="#BBBBBB" stroke-width="0.8"/>
<line x1="198" y1="979.4" x2="206" y2="979.4" stroke="#BBBBBB" stroke-width="0.8"/>
<line x1="218" y1="979.4" x2="234" y2="979.4" stroke="#BBBBBB" stroke-width="0.8"/>
<line x1="160" y1="983.65" x2="173" y2="983.65" stroke="#A8A8A8" stroke-width="0.8"/>
<line x1="178" y1="983.65" x2="191" y2="983.65" stroke="#BBBBBB" stroke-width="0.8"/>
<line x1="198" y1="983.65" x2="206" y2="983.65" stroke="#BBBBBB" stroke-width="0.8"/>
<line x1="218" y1="983.65" x2="234" y2="983.65" stroke="#BBBBBB" stroke-width="0.8"/>
<line x1="160" y1="987.9" x2="173" y2="987.9" stroke="#A8A8A8" stroke-width="0.8"/>
<line x1="178" y1="987.9" x2="191" y2="987.9" stroke="#BBBBBB" stroke-width="0.8"/>
<line x1="198" y1="987.9" x2="206" y2="987.9" stroke="#BBBBBB" stroke-width="0.8"/>
<line x1="218" y1="987.9" x2="234" y2="987.9" stroke="#BBBBBB" stroke-width="0.8"/>
<rect x="145.5" y="980.5" width="6" height="5" fill="#404040"/>
<line x1="105.7" y1="995.3" x2="208.3" y2="995.3" stroke="#BDBDBD" stroke-width="1.6" stroke-dasharray="1.2 1.2"/>
<rect x="130.4" y="1028.9" width="52.6" height="35.4" fill="none" stroke="#B0B0B0" stroke-width="0.5" stroke-dasharray="1 1"/>
<rect x="256" y="968" width="158.8" height="107" fill="#FFFFFF"/>
<rect x="256" y="968" width="158.8" height="6.4" fill="#B7472A"/>
<rect x="380" y="969.5" width="12" height="5" fill="#F3F3F3"/>
<rect x="256" y="974.4" width="158.8" height="14.9" fill="#F3F3F3"/>
<rect x="256" y="989.3" width="158.8" height="3.5" fill="#DDDDDD"/>
<rect x="256" y="992.8" width="10" height="82" fill="#E3E3E3"/>
<rect x="308" y="978" width="6" height="5" fill="#7FA7D6"/>
<rect x="318" y="978" width="6" height="5" fill="#7FA7D6"/>
<rect x="328" y="978" width="6" height="5" fill="#7FA7D6"/>
<rect x="338" y="978" width="6" height="5" fill="#7FA7D6"/>
<rect x="348" y="978" width="6" height="5" fill="#7FA7D6"/>
<rect x="358" y="978" width="6" height="5" fill="#7FA7D6"/>
<rect x="368" y="978" width="6" height="5" fill="#404040"/>
<line x1="266" y1="977.5" x2="300" y2="977.5" stroke="#C0C0C0" stroke-width="0.8"/>
<line x1="266" y1="982.0" x2="300" y2="982.0" stroke="#C0C0C0" stroke-width="0.8"/>
<rect x="270.2" y="993.5" width="26" height="26.2" fill="#FFFFFF" stroke="#D0D0D0" stroke-width="0.6"/>
<circle cx="283.2" cy="1006.3" r="6.4" fill="#FFD83F"/><line x1="292.8" y1="1006.3" x2="294.6" y2="1006.3" stroke="#FFD83F" stroke-width="2.8" stroke-linecap="round"/><line x1="290.0" y1="1013.1" x2="291.2" y2="1014.3" stroke="#FFD83F" stroke-width="2.8" stroke-linecap="round"/><line x1="283.2" y1="1015.9" x2="283.2" y2="1017.6" stroke="#FFD83F" stroke-width="2.8" stroke-linecap="round"/><line x1="276.4" y1="1013.1" x2="275.2" y2="1014.3" stroke="#FFD83F" stroke-width="2.8" stroke-linecap="round"/><line x1="273.6" y1="1006.3" x2="271.8" y2="1006.3" stroke="#FFD83F" stroke-width="2.8" stroke-linecap="round"/><line x1="276.4" y1="999.5" x2="275.2" y2="998.3" stroke="#FFD83F" stroke-width="2.8" stroke-linecap="round"/><line x1="283.2" y1="996.6" x2="283.2" y2="994.9" stroke="#FFD83F" stroke-width="2.8" stroke-linecap="round"/><line x1="290.0" y1="999.5" x2="291.2" y2="998.3" stroke="#FFD83F" stroke-width="2.8" stroke-linecap="round"/>
<circle cx="310.2" cy="1006.3" r="6.4" fill="#C8C8C8"/><line x1="319.8" y1="1006.3" x2="321.6" y2="1006.3" stroke="#C8C8C8" stroke-width="2.8" stroke-linecap="round"/><line x1="317.0" y1="1013.1" x2="318.2" y2="1014.3" stroke="#C8C8C8" stroke-width="2.8" stroke-linecap="round"/><line x1="310.2" y1="1015.9" x2="310.2" y2="1017.6" stroke="#C8C8C8" stroke-width="2.8" stroke-linecap="round"/><line x1="303.4" y1="1013.1" x2="302.2" y2="1014.3" stroke="#C8C8C8" stroke-width="2.8" stroke-linecap="round"/><line x1="300.6" y1="1006.3" x2="298.8" y2="1006.3" stroke="#C8C8C8" stroke-width="2.8" stroke-linecap="round"/><line x1="303.4" y1="999.5" x2="302.2" y2="998.3" stroke="#C8C8C8" stroke-width="2.8" stroke-linecap="round"/><line x1="310.2" y1="996.6" x2="310.2" y2="994.9" stroke="#C8C8C8" stroke-width="2.8" stroke-linecap="round"/><line x1="317.0" y1="999.5" x2="318.2" y2="998.3" stroke="#C8C8C8" stroke-width="2.8" stroke-linecap="round"/>
<circle cx="337.2" cy="1006.3" r="6.4" fill="#C0A8A0"/><line x1="346.8" y1="1006.3" x2="348.6" y2="1006.3" stroke="#C0A8A0" stroke-width="2.8" stroke-linecap="round"/><line x1="344.0" y1="1013.1" x2="345.2" y2="1014.3" stroke="#C0A8A0" stroke-width="2.8" stroke-linecap="round"/><line x1="337.2" y1="1015.9" x2="337.2" y2="1017.6" stroke="#C0A8A0" stroke-width="2.8" stroke-linecap="round"/><line x1="330.4" y1="1013.1" x2="329.2" y2="1014.3" stroke="#C0A8A0" stroke-width="2.8" stroke-linecap="round"/><line x1="327.6" y1="1006.3" x2="325.8" y2="1006.3" stroke="#C0A8A0" stroke-width="2.8" stroke-linecap="round"/><line x1="330.4" y1="999.5" x2="329.2" y2="998.3" stroke="#C0A8A0" stroke-width="2.8" stroke-linecap="round"/><line x1="337.2" y1="996.6" x2="337.2" y2="994.9" stroke="#C0A8A0" stroke-width="2.8" stroke-linecap="round"/><line x1="344.0" y1="999.5" x2="345.2" y2="998.3" stroke="#C0A8A0" stroke-width="2.8" stroke-linecap="round"/>
<circle cx="364.2" cy="1006.3" r="6.4" fill="#F8F0C0"/><line x1="373.8" y1="1006.3" x2="375.6" y2="1006.3" stroke="#F8F0C0" stroke-width="2.8" stroke-linecap="round"/><line x1="371.0" y1="1013.1" x2="372.2" y2="1014.3" stroke="#F8F0C0" stroke-width="2.8" stroke-linecap="round"/><line x1="364.2" y1="1015.9" x2="364.2" y2="1017.6" stroke="#F8F0C0" stroke-width="2.8" stroke-linecap="round"/><line x1="357.4" y1="1013.1" x2="356.2" y2="1014.3" stroke="#F8F0C0" stroke-width="2.8" stroke-linecap="round"/><line x1="354.6" y1="1006.3" x2="352.8" y2="1006.3" stroke="#F8F0C0" stroke-width="2.8" stroke-linecap="round"/><line x1="357.4" y1="999.5" x2="356.2" y2="998.3" stroke="#F8F0C0" stroke-width="2.8" stroke-linecap="round"/><line x1="364.2" y1="996.6" x2="364.2" y2="994.9" stroke="#F8F0C0" stroke-width="2.8" stroke-linecap="round"/><line x1="371.0" y1="999.5" x2="372.2" y2="998.3" stroke="#F8F0C0" stroke-width="2.8" stroke-linecap="round"/>
<circle cx="283.2" cy="1033.4" r="6.4" fill="#8A8E96"/><line x1="292.8" y1="1033.4" x2="294.6" y2="1033.4" stroke="#8A8E96" stroke-width="2.8" stroke-linecap="round"/><line x1="290.0" y1="1040.2" x2="291.2" y2="1041.4" stroke="#8A8E96" stroke-width="2.8" stroke-linecap="round"/><line x1="283.2" y1="1043.1" x2="283.2" y2="1044.8" stroke="#8A8E96" stroke-width="2.8" stroke-linecap="round"/><line x1="276.4" y1="1040.2" x2="275.2" y2="1041.4" stroke="#8A8E96" stroke-width="2.8" stroke-linecap="round"/><line x1="273.6" y1="1033.4" x2="271.8" y2="1033.4" stroke="#8A8E96" stroke-width="2.8" stroke-linecap="round"/><line x1="276.4" y1="1026.6" x2="275.2" y2="1025.4" stroke="#8A8E96" stroke-width="2.8" stroke-linecap="round"/><line x1="283.2" y1="1023.8" x2="283.2" y2="1022.1" stroke="#8A8E96" stroke-width="2.8" stroke-linecap="round"/><line x1="290.0" y1="1026.6" x2="291.2" y2="1025.4" stroke="#8A8E96" stroke-width="2.8" stroke-linecap="round"/>
<circle cx="310.2" cy="1033.4" r="6.4" fill="#5B8FD0"/><line x1="319.8" y1="1033.4" x2="321.6" y2="1033.4" stroke="#5B8FD0" stroke-width="2.8" stroke-linecap="round"/><line x1="317.0" y1="1040.2" x2="318.2" y2="1041.4" stroke="#5B8FD0" stroke-width="2.8" stroke-linecap="round"/><line x1="310.2" y1="1043.1" x2="310.2" y2="1044.8" stroke="#5B8FD0" stroke-width="2.8" stroke-linecap="round"/><line x1="303.4" y1="1040.2" x2="302.2" y2="1041.4" stroke="#5B8FD0" stroke-width="2.8" stroke-linecap="round"/><line x1="300.6" y1="1033.4" x2="298.8" y2="1033.4" stroke="#5B8FD0" stroke-width="2.8" stroke-linecap="round"/><line x1="303.4" y1="1026.6" x2="302.2" y2="1025.4" stroke="#5B8FD0" stroke-width="2.8" stroke-linecap="round"/><line x1="310.2" y1="1023.8" x2="310.2" y2="1022.1" stroke="#5B8FD0" stroke-width="2.8" stroke-linecap="round"/><line x1="317.0" y1="1026.6" x2="318.2" y2="1025.4" stroke="#5B8FD0" stroke-width="2.8" stroke-linecap="round"/>
<circle cx="337.2" cy="1033.4" r="6.4" fill="#E06A48"/><line x1="346.8" y1="1033.4" x2="348.6" y2="1033.4" stroke="#E06A48" stroke-width="2.8" stroke-linecap="round"/><line x1="344.0" y1="1040.2" x2="345.2" y2="1041.4" stroke="#E06A48" stroke-width="2.8" stroke-linecap="round"/><line x1="337.2" y1="1043.1" x2="337.2" y2="1044.8" stroke="#E06A48" stroke-width="2.8" stroke-linecap="round"/><line x1="330.4" y1="1040.2" x2="329.2" y2="1041.4" stroke="#E06A48" stroke-width="2.8" stroke-linecap="round"/><line x1="327.6" y1="1033.4" x2="325.8" y2="1033.4" stroke="#E06A48" stroke-width="2.8" stroke-linecap="round"/><line x1="330.4" y1="1026.6" x2="329.2" y2="1025.4" stroke="#E06A48" stroke-width="2.8" stroke-linecap="round"/><line x1="337.2" y1="1023.8" x2="337.2" y2="1022.1" stroke="#E06A48" stroke-width="2.8" stroke-linecap="round"/><line x1="344.0" y1="1026.6" x2="345.2" y2="1025.4" stroke="#E06A48" stroke-width="2.8" stroke-linecap="round"/>
<circle cx="364.2" cy="1033.4" r="6.4" fill="#A0A0A0"/><line x1="373.8" y1="1033.4" x2="375.6" y2="1033.4" stroke="#A0A0A0" stroke-width="2.8" stroke-linecap="round"/><line x1="371.0" y1="1040.2" x2="372.2" y2="1041.4" stroke="#A0A0A0" stroke-width="2.8" stroke-linecap="round"/><line x1="364.2" y1="1043.1" x2="364.2" y2="1044.8" stroke="#A0A0A0" stroke-width="2.8" stroke-linecap="round"/><line x1="357.4" y1="1040.2" x2="356.2" y2="1041.4" stroke="#A0A0A0" stroke-width="2.8" stroke-linecap="round"/><line x1="354.6" y1="1033.4" x2="352.8" y2="1033.4" stroke="#A0A0A0" stroke-width="2.8" stroke-linecap="round"/><line x1="357.4" y1="1026.6" x2="356.2" y2="1025.4" stroke="#A0A0A0" stroke-width="2.8" stroke-linecap="round"/><line x1="364.2" y1="1023.8" x2="364.2" y2="1022.1" stroke="#A0A0A0" stroke-width="2.8" stroke-linecap="round"/><line x1="371.0" y1="1026.6" x2="372.2" y2="1025.4" stroke="#A0A0A0" stroke-width="2.8" stroke-linecap="round"/>
<circle cx="391.2" cy="1033.4" r="6.4" fill="#B8D040"/><line x1="400.8" y1="1033.4" x2="402.6" y2="1033.4" stroke="#B8D040" stroke-width="2.8" stroke-linecap="round"/><line x1="398.0" y1="1040.2" x2="399.2" y2="1041.4" stroke="#B8D040" stroke-width="2.8" stroke-linecap="round"/><line x1="391.2" y1="1043.1" x2="391.2" y2="1044.8" stroke="#B8D040" stroke-width="2.8" stroke-linecap="round"/><line x1="384.4" y1="1040.2" x2="383.2" y2="1041.4" stroke="#B8D040" stroke-width="2.8" stroke-linecap="round"/><line x1="381.6" y1="1033.4" x2="379.8" y2="1033.4" stroke="#B8D040" stroke-width="2.8" stroke-linecap="round"/><line x1="384.4" y1="1026.6" x2="383.2" y2="1025.4" stroke="#B8D040" stroke-width="2.8" stroke-linecap="round"/><line x1="391.2" y1="1023.8" x2="391.2" y2="1022.1" stroke="#B8D040" stroke-width="2.8" stroke-linecap="round"/><line x1="398.0" y1="1026.6" x2="399.2" y2="1025.4" stroke="#B8D040" stroke-width="2.8" stroke-linecap="round"/>
<circle cx="283.2" cy="1060.7" r="6.4" fill="#EDEDED"/><line x1="292.8" y1="1060.7" x2="294.6" y2="1060.7" stroke="#EDEDED" stroke-width="2.8" stroke-linecap="round"/><line x1="290.0" y1="1067.5" x2="291.2" y2="1068.7" stroke="#EDEDED" stroke-width="2.8" stroke-linecap="round"/><line x1="283.2" y1="1070.4" x2="283.2" y2="1072.0" stroke="#EDEDED" stroke-width="2.8" stroke-linecap="round"/><line x1="276.4" y1="1067.5" x2="275.2" y2="1068.7" stroke="#EDEDED" stroke-width="2.8" stroke-linecap="round"/><line x1="273.6" y1="1060.7" x2="271.8" y2="1060.7" stroke="#EDEDED" stroke-width="2.8" stroke-linecap="round"/><line x1="276.4" y1="1053.9" x2="275.2" y2="1052.7" stroke="#EDEDED" stroke-width="2.8" stroke-linecap="round"/><line x1="283.2" y1="1051.0" x2="283.2" y2="1049.4" stroke="#EDEDED" stroke-width="2.8" stroke-linecap="round"/><line x1="290.0" y1="1053.9" x2="291.2" y2="1052.7" stroke="#EDEDED" stroke-width="2.8" stroke-linecap="round"/>
<circle cx="310.2" cy="1060.7" r="6.4" fill="#E2E2E2"/><line x1="319.8" y1="1060.7" x2="321.6" y2="1060.7" stroke="#E2E2E2" stroke-width="2.8" stroke-linecap="round"/><line x1="317.0" y1="1067.5" x2="318.2" y2="1068.7" stroke="#E2E2E2" stroke-width="2.8" stroke-linecap="round"/><line x1="310.2" y1="1070.4" x2="310.2" y2="1072.0" stroke="#E2E2E2" stroke-width="2.8" stroke-linecap="round"/><line x1="303.4" y1="1067.5" x2="302.2" y2="1068.7" stroke="#E2E2E2" stroke-width="2.8" stroke-linecap="round"/><line x1="300.6" y1="1060.7" x2="298.8" y2="1060.7" stroke="#E2E2E2" stroke-width="2.8" stroke-linecap="round"/><line x1="303.4" y1="1053.9" x2="302.2" y2="1052.7" stroke="#E2E2E2" stroke-width="2.8" stroke-linecap="round"/><line x1="310.2" y1="1051.0" x2="310.2" y2="1049.4" stroke="#E2E2E2" stroke-width="2.8" stroke-linecap="round"/><line x1="317.0" y1="1053.9" x2="318.2" y2="1052.7" stroke="#E2E2E2" stroke-width="2.8" stroke-linecap="round"/>
<circle cx="337.2" cy="1060.7" r="6.4" fill="#F0DCD4"/><line x1="346.8" y1="1060.7" x2="348.6" y2="1060.7" stroke="#F0DCD4" stroke-width="2.8" stroke-linecap="round"/><line x1="344.0" y1="1067.5" x2="345.2" y2="1068.7" stroke="#F0DCD4" stroke-width="2.8" stroke-linecap="round"/><line x1="337.2" y1="1070.4" x2="337.2" y2="1072.0" stroke="#F0DCD4" stroke-width="2.8" stroke-linecap="round"/><line x1="330.4" y1="1067.5" x2="329.2" y2="1068.7" stroke="#F0DCD4" stroke-width="2.8" stroke-linecap="round"/><line x1="327.6" y1="1060.7" x2="325.8" y2="1060.7" stroke="#F0DCD4" stroke-width="2.8" stroke-linecap="round"/><line x1="330.4" y1="1053.9" x2="329.2" y2="1052.7" stroke="#F0DCD4" stroke-width="2.8" stroke-linecap="round"/><line x1="337.2" y1="1051.0" x2="337.2" y2="1049.4" stroke="#F0DCD4" stroke-width="2.8" stroke-linecap="round"/><line x1="344.0" y1="1053.9" x2="345.2" y2="1052.7" stroke="#F0DCD4" stroke-width="2.8" stroke-linecap="round"/>
<circle cx="364.2" cy="1060.7" r="6.4" fill="#E4E4E4"/><line x1="373.8" y1="1060.7" x2="375.6" y2="1060.7" stroke="#E4E4E4" stroke-width="2.8" stroke-linecap="round"/><line x1="371.0" y1="1067.5" x2="372.2" y2="1068.7" stroke="#E4E4E4" stroke-width="2.8" stroke-linecap="round"/><line x1="364.2" y1="1070.4" x2="364.2" y2="1072.0" stroke="#E4E4E4" stroke-width="2.8" stroke-linecap="round"/><line x1="357.4" y1="1067.5" x2="356.2" y2="1068.7" stroke="#E4E4E4" stroke-width="2.8" stroke-linecap="round"/><line x1="354.6" y1="1060.7" x2="352.8" y2="1060.7" stroke="#E4E4E4" stroke-width="2.8" stroke-linecap="round"/><line x1="357.4" y1="1053.9" x2="356.2" y2="1052.7" stroke="#E4E4E4" stroke-width="2.8" stroke-linecap="round"/><line x1="364.2" y1="1051.0" x2="364.2" y2="1049.4" stroke="#E4E4E4" stroke-width="2.8" stroke-linecap="round"/><line x1="371.0" y1="1053.9" x2="372.2" y2="1052.7" stroke="#E4E4E4" stroke-width="2.8" stroke-linecap="round"/>
<circle cx="391.2" cy="1060.7" r="6.4" fill="#F4ECD8"/><line x1="400.8" y1="1060.7" x2="402.6" y2="1060.7" stroke="#F4ECD8" stroke-width="2.8" stroke-linecap="round"/><line x1="398.0" y1="1067.5" x2="399.2" y2="1068.7" stroke="#F4ECD8" stroke-width="2.8" stroke-linecap="round"/><line x1="391.2" y1="1070.4" x2="391.2" y2="1072.0" stroke="#F4ECD8" stroke-width="2.8" stroke-linecap="round"/><line x1="384.4" y1="1067.5" x2="383.2" y2="1068.7" stroke="#F4ECD8" stroke-width="2.8" stroke-linecap="round"/><line x1="381.6" y1="1060.7" x2="379.8" y2="1060.7" stroke="#F4ECD8" stroke-width="2.8" stroke-linecap="round"/><line x1="384.4" y1="1053.9" x2="383.2" y2="1052.7" stroke="#F4ECD8" stroke-width="2.8" stroke-linecap="round"/><line x1="391.2" y1="1051.0" x2="391.2" y2="1049.4" stroke="#F4ECD8" stroke-width="2.8" stroke-linecap="round"/><line x1="398.0" y1="1053.9" x2="399.2" y2="1052.7" stroke="#F4ECD8" stroke-width="2.8" stroke-linecap="round"/>
<line x1="306.6" y1="989.3" x2="297.4" y2="998.5" stroke="#E03020" stroke-width="0.9"/>
<line x1="321.4" y1="989.3" x2="316.5" y2="999.2" stroke="#E03020" stroke-width="0.9"/>
<line x1="332" y1="990" x2="334.9" y2="997" stroke="#E03020" stroke-width="0.9"/>
<line x1="348.3" y1="991.4" x2="355.4" y2="998.5" stroke="#E03020" stroke-width="0.9"/>
<polygon points="283.2,985.6 285.2,987.6 283.2,989.6 281.2,987.6" fill="#F2C230"/>
<polygon points="310.4,985.6 312.4,987.6 310.4,989.6 308.4,987.6" fill="#F2C230"/>
<polygon points="337.3,985.6 339.3,987.6 337.3,989.6 335.3,987.6" fill="#F2C230"/>
<polygon points="364.2,985.6 366.2,987.6 364.2,989.6 362.2,987.6" fill="#F2C230"/>
<polygon points="391,985.6 393,987.6 391,989.6 389,987.6" fill="#F2C230"/>
<line x1="285" y1="982.5" x2="274" y2="988" stroke="#E03020" stroke-width="0.9"/>
<circle cx="256.3" cy="1284" r="27" fill="#000000"/><line x1="296.3" y1="1284.0" x2="304.3" y2="1284.0" stroke="#000000" stroke-width="10" stroke-linecap="round"/><line x1="284.6" y1="1312.3" x2="290.2" y2="1317.9" stroke="#000000" stroke-width="10" stroke-linecap="round"/><line x1="256.3" y1="1324.0" x2="256.3" y2="1332.0" stroke="#000000" stroke-width="10" stroke-linecap="round"/><line x1="228.0" y1="1312.3" x2="222.4" y2="1317.9" stroke="#000000" stroke-width="10" stroke-linecap="round"/><line x1="216.3" y1="1284.0" x2="208.3" y2="1284.0" stroke="#000000" stroke-width="10" stroke-linecap="round"/><line x1="228.0" y1="1255.7" x2="222.4" y2="1250.1" stroke="#000000" stroke-width="10" stroke-linecap="round"/><line x1="256.3" y1="1244.0" x2="256.3" y2="1236.0" stroke="#000000" stroke-width="10" stroke-linecap="round"/><line x1="284.6" y1="1255.7" x2="290.2" y2="1250.1" stroke="#000000" stroke-width="10" stroke-linecap="round"/>
<g fill="none" stroke="#7A7A7A" stroke-width="1.1">
<path d="M189.3 1644.5 Q197 1643.5 205.5 1646 Q213.5 1643.5 221.8 1644.5 V1670.5 Q213.5 1669.8 205.5 1672 Q197 1669.8 189.3 1670.5 Z"/><line x1="205.5" y1="1646" x2="205.5" y2="1672"/>
</g>
<polyline points="209,1656.5 214.5,1663 223,1651" fill="none" stroke="#6A6A6A" stroke-width="2.6"/>
<polygon points="2281,1646 2287,1652 2275,1652" fill="#6A6A6A"/>
<g stroke="#6A6A6A" stroke-width="1.1"><line x1="2268" y1="1656.0" x2="2294" y2="1656.0"/><line x1="2268" y1="1659.5" x2="2294" y2="1659.5"/><line x1="2268" y1="1663.0" x2="2294" y2="1663.0"/><line x1="2268" y1="1666.5" x2="2294" y2="1666.5"/><line x1="2268" y1="1670.0" x2="2294" y2="1670.0"/></g>
<rect x="2413.3" y="1620.7" width="75.7" height="78.3" fill="#C9C9C9"/>
<g fill="none" stroke="#6A6A6A" stroke-width="1.3">
<rect x="2434.3" y="1644.5" width="33" height="30.8"/><line x1="2441" y1="1644.5" x2="2441" y2="1675.3"/><line x1="2441" y1="1667" x2="2467.3" y2="1667"/><rect x="2447.5" y="1650" width="13.5" height="9.5"/>
<rect x="2510" y="1645.5" width="13.5" height="11.5"/><rect x="2528" y="1645.5" width="13.5" height="11.5"/><rect x="2510" y="1662.5" width="13.5" height="11.5"/><rect x="2528" y="1662.5" width="13.5" height="11.5"/>
<path d="M2586.4 1646 Q2594 1645 2602.4 1648 Q2610.5 1645 2618.4 1646 V1672.5 Q2610.5 1671.5 2602.4 1674.5 Q2594 1671.5 2586.4 1672.5 Z"/><line x1="2602.4" y1="1648" x2="2602.4" y2="1674.5"/>
<line x1="2590" y1="1652.0" x2="2599" y2="1652.0"/><line x1="2606" y1="1652.0" x2="2615" y2="1652.0"/>
<line x1="2590" y1="1656.2" x2="2599" y2="1656.2"/><line x1="2606" y1="1656.2" x2="2615" y2="1656.2"/>
<line x1="2590" y1="1660.4" x2="2599" y2="1660.4"/><line x1="2606" y1="1660.4" x2="2615" y2="1660.4"/>
<line x1="2590" y1="1664.6" x2="2599" y2="1664.6"/><line x1="2606" y1="1664.6" x2="2615" y2="1664.6"/>
<line x1="2590" y1="1668.8" x2="2599" y2="1668.8"/><line x1="2606" y1="1668.8" x2="2615" y2="1668.8"/>
<polyline points="2664.5,1648 2664.5,1664 2692.5,1664 2692.5,1648"/><line x1="2678.5" y1="1664" x2="2678.5" y2="1673.5"/><line x1="2672.5" y1="1674.5" x2="2684.5" y2="1674.5"/><line x1="2672" y1="1654" x2="2685" y2="1654"/>
</g>
<rect x="2661.5" y="1645" width="34" height="3.5" fill="#6A6A6A"/>
<rect x="2728" y="1657.3" width="15" height="4.5" fill="#6A6A6A"/>
<line x1="2754.6" y1="1660.7" x2="3002" y2="1660.7" stroke="#A8A8A8" stroke-width="1.3"/>
<line x1="2878.7" y1="1654.5" x2="2878.7" y2="1666" stroke="#A8A8A8" stroke-width="1.3"/>
<rect x="2807" y="1646.7" width="9.6" height="26.3" fill="#6A6A6A"/>
<rect x="3013" y="1657.6" width="20" height="4.8" fill="#6A6A6A"/><rect x="3020.6" y="1650" width="4.8" height="20" fill="#6A6A6A"/>
<g fill="none" stroke="#7A7A7A" stroke-width="1.1"><rect x="3147.5" y="1645.5" width="29" height="28"/><line x1="3162" y1="1649" x2="3162" y2="1670"/><line x1="3151" y1="1659.5" x2="3173" y2="1659.5"/><polyline points="3159,1652 3162,1649 3165,1652"/><polyline points="3159,1667 3162,1670 3165,1667"/><polyline points="3154,1656.5 3151,1659.5 3154,1662.5"/><polyline points="3170,1656.5 3173,1659.5 3170,1662.5"/></g>
<rect x="1049" y="413" width="1598" height="37" fill="#FFFFFF"/>
<rect x="490" y="588" width="37" height="897.6" fill="#FFFFFF"/>
<line x1="1057.1" y1="428" x2="1057.1" y2="433" stroke="#A8A8A8" stroke-width="1.3"/>
<line x1="1068.9" y1="425" x2="1068.9" y2="436.8" stroke="#444444" stroke-width="1.3"/>
<line x1="1080.7" y1="428" x2="1080.7" y2="433" stroke="#A8A8A8" stroke-width="1.3"/>
<line x1="1104.3" y1="428" x2="1104.3" y2="433" stroke="#A8A8A8" stroke-width="1.3"/>
<line x1="1116.2" y1="425" x2="1116.2" y2="436.8" stroke="#444444" stroke-width="1.3"/>
<line x1="1128.0" y1="428" x2="1128.0" y2="433" stroke="#A8A8A8" stroke-width="1.3"/>
<line x1="1151.6" y1="428" x2="1151.6" y2="433" stroke="#A8A8A8" stroke-width="1.3"/>
<line x1="1163.4" y1="425" x2="1163.4" y2="436.8" stroke="#444444" stroke-width="1.3"/>
<line x1="1175.3" y1="428" x2="1175.3" y2="433" stroke="#A8A8A8" stroke-width="1.3"/>
<line x1="1198.9" y1="428" x2="1198.9" y2="433" stroke="#A8A8A8" stroke-width="1.3"/>
<line x1="1210.7" y1="425" x2="1210.7" y2="436.8" stroke="#444444" stroke-width="1.3"/>
<line x1="1222.5" y1="428" x2="1222.5" y2="433" stroke="#A8A8A8" stroke-width="1.3"/>
<line x1="1246.2" y1="428" x2="1246.2" y2="433" stroke="#A8A8A8" stroke-width="1.3"/>
<line x1="1258.0" y1="425" x2="1258.0" y2="436.8" stroke="#444444" stroke-width="1.3"/>
<line x1="1269.8" y1="428" x2="1269.8" y2="433" stroke="#A8A8A8" stroke-width="1.3"/>
<line x1="1293.5" y1="428" x2="1293.5" y2="433" stroke="#A8A8A8" stroke-width="1.3"/>
<line x1="1305.3" y1="425" x2="1305.3" y2="436.8" stroke="#444444" stroke-width="1.3"/>
<line x1="1317.1" y1="428" x2="1317.1" y2="433" stroke="#A8A8A8" stroke-width="1.3"/>
<line x1="1340.7" y1="428" x2="1340.7" y2="433" stroke="#A8A8A8" stroke-width="1.3"/>
<line x1="1352.6" y1="425" x2="1352.6" y2="436.8" stroke="#444444" stroke-width="1.3"/>
<line x1="1364.4" y1="428" x2="1364.4" y2="433" stroke="#A8A8A8" stroke-width="1.3"/>
<line x1="1388.0" y1="428" x2="1388.0" y2="433" stroke="#A8A8A8" stroke-width="1.3"/>
<line x1="1399.8" y1="425" x2="1399.8" y2="436.8" stroke="#444444" stroke-width="1.3"/>
<line x1="1411.7" y1="428" x2="1411.7" y2="433" stroke="#A8A8A8" stroke-width="1.3"/>
<line x1="1435.3" y1="428" x2="1435.3" y2="433" stroke="#A8A8A8" stroke-width="1.3"/>
<line x1="1447.1" y1="425" x2="1447.1" y2="436.8" stroke="#444444" stroke-width="1.3"/>
<line x1="1458.9" y1="428" x2="1458.9" y2="433" stroke="#A8A8A8" stroke-width="1.3"/>
<line x1="1482.6" y1="428" x2="1482.6" y2="433" stroke="#A8A8A8" stroke-width="1.3"/>
<line x1="1494.4" y1="425" x2="1494.4" y2="436.8" stroke="#444444" stroke-width="1.3"/>
<line x1="1506.2" y1="428" x2="1506.2" y2="433" stroke="#A8A8A8" stroke-width="1.3"/>
<line x1="1529.9" y1="428" x2="1529.9" y2="433" stroke="#A8A8A8" stroke-width="1.3"/>
<line x1="1541.7" y1="425" x2="1541.7" y2="436.8" stroke="#444444" stroke-width="1.3"/>
<line x1="1553.5" y1="428" x2="1553.5" y2="433" stroke="#A8A8A8" stroke-width="1.3"/>
<line x1="1577.1" y1="428" x2="1577.1" y2="433" stroke="#A8A8A8" stroke-width="1.3"/>
<line x1="1589.0" y1="425" x2="1589.0" y2="436.8" stroke="#444444" stroke-width="1.3"/>
<line x1="1600.8" y1="428" x2="1600.8" y2="433" stroke="#A8A8A8" stroke-width="1.3"/>
<line x1="1624.4" y1="428" x2="1624.4" y2="433" stroke="#A8A8A8" stroke-width="1.3"/>
<line x1="1636.2" y1="425" x2="1636.2" y2="436.8" stroke="#444444" stroke-width="1.3"/>
<line x1="1648.1" y1="428" x2="1648.1" y2="433" stroke="#A8A8A8" stroke-width="1.3"/>
<line x1="1671.7" y1="428" x2="1671.7" y2="433" stroke="#A8A8A8" stroke-width="1.3"/>
<line x1="1683.5" y1="425" x2="1683.5" y2="436.8" stroke="#444444" stroke-width="1.3"/>
<line x1="1695.3" y1="428" x2="1695.3" y2="433" stroke="#A8A8A8" stroke-width="1.3"/>
<line x1="1719.0" y1="428" x2="1719.0" y2="433" stroke="#A8A8A8" stroke-width="1.3"/>
<line x1="1730.8" y1="425" x2="1730.8" y2="436.8" stroke="#444444" stroke-width="1.3"/>
<line x1="1742.6" y1="428" x2="1742.6" y2="433" stroke="#A8A8A8" stroke-width="1.3"/>
<line x1="1766.3" y1="428" x2="1766.3" y2="433" stroke="#A8A8A8" stroke-width="1.3"/>
<line x1="1778.1" y1="425" x2="1778.1" y2="436.8" stroke="#444444" stroke-width="1.3"/>
<line x1="1789.9" y1="428" x2="1789.9" y2="433" stroke="#A8A8A8" stroke-width="1.3"/>
<line x1="1813.5" y1="428" x2="1813.5" y2="433" stroke="#A8A8A8" stroke-width="1.3"/>
<line x1="1825.4" y1="425" x2="1825.4" y2="436.8" stroke="#444444" stroke-width="1.3"/>
<line x1="1837.2" y1="428" x2="1837.2" y2="433" stroke="#A8A8A8" stroke-width="1.3"/>
<line x1="1860.8" y1="428" x2="1860.8" y2="433" stroke="#A8A8A8" stroke-width="1.3"/>
<line x1="1872.6" y1="425" x2="1872.6" y2="436.8" stroke="#444444" stroke-width="1.3"/>
<line x1="1884.5" y1="428" x2="1884.5" y2="433" stroke="#A8A8A8" stroke-width="1.3"/>
<line x1="1908.1" y1="428" x2="1908.1" y2="433" stroke="#A8A8A8" stroke-width="1.3"/>
<line x1="1919.9" y1="425" x2="1919.9" y2="436.8" stroke="#444444" stroke-width="1.3"/>
<line x1="1931.7" y1="428" x2="1931.7" y2="433" stroke="#A8A8A8" stroke-width="1.3"/>
<line x1="1955.4" y1="428" x2="1955.4" y2="433" stroke="#A8A8A8" stroke-width="1.3"/>
<line x1="1967.2" y1="425" x2="1967.2" y2="436.8" stroke="#444444" stroke-width="1.3"/>
<line x1="1979.0" y1="428" x2="1979.0" y2="433" stroke="#A8A8A8" stroke-width="1.3"/>
<line x1="2002.7" y1="428" x2="2002.7" y2="433" stroke="#A8A8A8" stroke-width="1.3"/>
<line x1="2014.5" y1="425" x2="2014.5" y2="436.8" stroke="#444444" stroke-width="1.3"/>
<line x1="2026.3" y1="428" x2="2026.3" y2="433" stroke="#A8A8A8" stroke-width="1.3"/>
<line x1="2049.9" y1="428" x2="2049.9" y2="433" stroke="#A8A8A8" stroke-width="1.3"/>
<line x1="2061.8" y1="425" x2="2061.8" y2="436.8" stroke="#444444" stroke-width="1.3"/>
<line x1="2073.6" y1="428" x2="2073.6" y2="433" stroke="#A8A8A8" stroke-width="1.3"/>
<line x1="2097.2" y1="428" x2="2097.2" y2="433" stroke="#A8A8A8" stroke-width="1.3"/>
<line x1="2109.0" y1="425" x2="2109.0" y2="436.8" stroke="#444444" stroke-width="1.3"/>
<line x1="2120.9" y1="428" x2="2120.9" y2="433" stroke="#A8A8A8" stroke-width="1.3"/>
<line x1="2144.5" y1="428" x2="2144.5" y2="433" stroke="#A8A8A8" stroke-width="1.3"/>
<line x1="2156.3" y1="425" x2="2156.3" y2="436.8" stroke="#444444" stroke-width="1.3"/>
<line x1="2168.1" y1="428" x2="2168.1" y2="433" stroke="#A8A8A8" stroke-width="1.3"/>
<line x1="2191.8" y1="428" x2="2191.8" y2="433" stroke="#A8A8A8" stroke-width="1.3"/>
<line x1="2203.6" y1="425" x2="2203.6" y2="436.8" stroke="#444444" stroke-width="1.3"/>
<line x1="2215.4" y1="428" x2="2215.4" y2="433" stroke="#A8A8A8" stroke-width="1.3"/>
<line x1="2239.1" y1="428" x2="2239.1" y2="433" stroke="#A8A8A8" stroke-width="1.3"/>
<line x1="2250.9" y1="425" x2="2250.9" y2="436.8" stroke="#444444" stroke-width="1.3"/>
<line x1="2262.7" y1="428" x2="2262.7" y2="433" stroke="#A8A8A8" stroke-width="1.3"/>
<line x1="2286.3" y1="428" x2="2286.3" y2="433" stroke="#A8A8A8" stroke-width="1.3"/>
<line x1="2298.2" y1="425" x2="2298.2" y2="436.8" stroke="#444444" stroke-width="1.3"/>
<line x1="2310.0" y1="428" x2="2310.0" y2="433" stroke="#A8A8A8" stroke-width="1.3"/>
<line x1="2333.6" y1="428" x2="2333.6" y2="433" stroke="#A8A8A8" stroke-width="1.3"/>
<line x1="2345.4" y1="425" x2="2345.4" y2="436.8" stroke="#444444" stroke-width="1.3"/>
<line x1="2357.3" y1="428" x2="2357.3" y2="433" stroke="#A8A8A8" stroke-width="1.3"/>
<line x1="2380.9" y1="428" x2="2380.9" y2="433" stroke="#A8A8A8" stroke-width="1.3"/>
<line x1="2392.7" y1="425" x2="2392.7" y2="436.8" stroke="#444444" stroke-width="1.3"/>
<line x1="2404.5" y1="428" x2="2404.5" y2="433" stroke="#A8A8A8" stroke-width="1.3"/>
<line x1="2428.2" y1="428" x2="2428.2" y2="433" stroke="#A8A8A8" stroke-width="1.3"/>
<line x1="2440.0" y1="425" x2="2440.0" y2="436.8" stroke="#444444" stroke-width="1.3"/>
<line x1="2451.8" y1="428" x2="2451.8" y2="433" stroke="#A8A8A8" stroke-width="1.3"/>
<line x1="2475.5" y1="428" x2="2475.5" y2="433" stroke="#A8A8A8" stroke-width="1.3"/>
<line x1="2487.3" y1="425" x2="2487.3" y2="436.8" stroke="#444444" stroke-width="1.3"/>
<line x1="2499.1" y1="428" x2="2499.1" y2="433" stroke="#A8A8A8" stroke-width="1.3"/>
<line x1="2522.7" y1="428" x2="2522.7" y2="433" stroke="#A8A8A8" stroke-width="1.3"/>
<line x1="2534.6" y1="425" x2="2534.6" y2="436.8" stroke="#444444" stroke-width="1.3"/>
<line x1="2546.4" y1="428" x2="2546.4" y2="433" stroke="#A8A8A8" stroke-width="1.3"/>
<line x1="2570.0" y1="428" x2="2570.0" y2="433" stroke="#A8A8A8" stroke-width="1.3"/>
<line x1="2581.8" y1="425" x2="2581.8" y2="436.8" stroke="#444444" stroke-width="1.3"/>
<line x1="2593.7" y1="428" x2="2593.7" y2="433" stroke="#A8A8A8" stroke-width="1.3"/>
<line x1="2617.3" y1="428" x2="2617.3" y2="433" stroke="#A8A8A8" stroke-width="1.3"/>
<line x1="2629.1" y1="425" x2="2629.1" y2="436.8" stroke="#444444" stroke-width="1.3"/>
<line x1="2640.9" y1="428" x2="2640.9" y2="433" stroke="#A8A8A8" stroke-width="1.3"/>
<rect x="1076.1" y="420" width="29.4" height="24" fill="#FFFFFF"/>
<text x="1077.2" y="441.5" font-size="27.71" fill="#3A3A3A" textLength="28.4" lengthAdjust="spacingAndGlyphs">16</text>
<rect x="1123.4" y="420" width="29.4" height="24" fill="#FFFFFF"/>
<text x="1124.5" y="441.5" font-size="27.71" fill="#3A3A3A" textLength="28.4" lengthAdjust="spacingAndGlyphs">15</text>
<rect x="1170.5" y="420" width="29.8" height="24" fill="#FFFFFF"/>
<text x="1171.6" y="441.5" font-size="27.71" fill="#3A3A3A" textLength="28.4" lengthAdjust="spacingAndGlyphs">14</text>
<rect x="1218.0" y="420" width="29.4" height="24" fill="#FFFFFF"/>
<text x="1219.1" y="441.5" font-size="27.71" fill="#3A3A3A" textLength="28.4" lengthAdjust="spacingAndGlyphs">13</text>
<rect x="1265.4" y="420" width="29.1" height="24" fill="#FFFFFF"/>
<text x="1266.5" y="441.5" font-size="27.71" fill="#3A3A3A" textLength="28.4" lengthAdjust="spacingAndGlyphs">12</text>
<rect x="1313.6" y="420" width="27.3" height="24" fill="#FFFFFF"/>
<text x="1314.6" y="441.5" font-size="27.71" fill="#3A3A3A" textLength="26.5" lengthAdjust="spacingAndGlyphs">11</text>
<rect x="1359.8" y="420" width="29.5" height="24" fill="#FFFFFF"/>
<text x="1360.8" y="441.5" font-size="27.71" fill="#3A3A3A" textLength="28.4" lengthAdjust="spacingAndGlyphs">10</text>
<rect x="1413.3" y="420" width="16.9" height="24" fill="#FFFFFF"/>
<text x="1414.1" y="441.5" font-size="27.71" fill="#3A3A3A">9</text>
<rect x="1460.5" y="420" width="17.2" height="24" fill="#FFFFFF"/>
<text x="1461.4" y="441.5" font-size="27.71" fill="#3A3A3A">8</text>
<rect x="1508.0" y="420" width="16.6" height="24" fill="#FFFFFF"/>
<text x="1508.6" y="441.5" font-size="27.71" fill="#3A3A3A">7</text>
<rect x="1555.2" y="420" width="16.9" height="24" fill="#FFFFFF"/>
<text x="1555.8" y="441.5" font-size="27.71" fill="#3A3A3A">6</text>
<rect x="1602.3" y="420" width="17.2" height="24" fill="#FFFFFF"/>
<text x="1603.2" y="441.5" font-size="27.71" fill="#3A3A3A">5</text>
<rect x="1649.1" y="420" width="18.1" height="24" fill="#FFFFFF"/>
<text x="1650.6" y="441.5" font-size="27.71" fill="#3A3A3A">4</text>
<rect x="1696.8" y="420" width="17.3" height="24" fill="#FFFFFF"/>
<text x="1697.8" y="441.5" font-size="27.71" fill="#3A3A3A">3</text>
<rect x="1744.4" y="420" width="16.6" height="24" fill="#FFFFFF"/>
<text x="1745.0" y="441.5" font-size="27.71" fill="#3A3A3A">2</text>
<rect x="1792.0" y="420" width="16.1" height="24" fill="#FFFFFF"/>
<text x="1791.9" y="441.5" font-size="27.71" fill="#3A3A3A">1</text>
<rect x="1838.6" y="420" width="17.3" height="24" fill="#FFFFFF"/>
<text x="1839.5" y="441.5" font-size="27.71" fill="#3A3A3A">0</text>
<rect x="1886.6" y="420" width="16.1" height="24" fill="#FFFFFF"/>
<text x="1886.5" y="441.5" font-size="27.71" fill="#3A3A3A">1</text>
<rect x="1933.6" y="420" width="16.6" height="24" fill="#FFFFFF"/>
<text x="1934.2" y="441.5" font-size="27.71" fill="#3A3A3A">2</text>
<rect x="1980.5" y="420" width="17.3" height="24" fill="#FFFFFF"/>
<text x="1981.5" y="441.5" font-size="27.71" fill="#3A3A3A">3</text>
<rect x="2027.4" y="420" width="18.1" height="24" fill="#FFFFFF"/>
<text x="2028.8" y="441.5" font-size="27.71" fill="#3A3A3A">4</text>
<rect x="2075.1" y="420" width="17.2" height="24" fill="#FFFFFF"/>
<text x="2076.0" y="441.5" font-size="27.71" fill="#3A3A3A">5</text>
<rect x="2122.5" y="420" width="16.9" height="24" fill="#FFFFFF"/>
<text x="2123.2" y="441.5" font-size="27.71" fill="#3A3A3A">6</text>
<rect x="2170.0" y="420" width="16.6" height="24" fill="#FFFFFF"/>
<text x="2170.6" y="441.5" font-size="27.71" fill="#3A3A3A">7</text>
<rect x="2217.0" y="420" width="17.2" height="24" fill="#FFFFFF"/>
<text x="2217.8" y="441.5" font-size="27.71" fill="#3A3A3A">8</text>
<rect x="2264.4" y="420" width="16.9" height="24" fill="#FFFFFF"/>
<text x="2265.1" y="441.5" font-size="27.71" fill="#3A3A3A">9</text>
<rect x="2305.4" y="420" width="29.5" height="24" fill="#FFFFFF"/>
<text x="2306.4" y="441.5" font-size="27.71" fill="#3A3A3A" textLength="28.4" lengthAdjust="spacingAndGlyphs">10</text>
<rect x="2353.7" y="420" width="27.3" height="24" fill="#FFFFFF"/>
<text x="2354.8" y="441.5" font-size="27.71" fill="#3A3A3A" textLength="26.5" lengthAdjust="spacingAndGlyphs">11</text>
<rect x="2400.1" y="420" width="29.1" height="24" fill="#FFFFFF"/>
<text x="2401.2" y="441.5" font-size="27.71" fill="#3A3A3A" textLength="28.4" lengthAdjust="spacingAndGlyphs">12</text>
<rect x="2447.3" y="420" width="29.4" height="24" fill="#FFFFFF"/>
<text x="2448.3" y="441.5" font-size="27.71" fill="#3A3A3A" textLength="28.4" lengthAdjust="spacingAndGlyphs">13</text>
<rect x="2494.3" y="420" width="29.8" height="24" fill="#FFFFFF"/>
<text x="2495.4" y="441.5" font-size="27.71" fill="#3A3A3A" textLength="28.4" lengthAdjust="spacingAndGlyphs">14</text>
<rect x="2541.8" y="420" width="29.4" height="24" fill="#FFFFFF"/>
<text x="2542.9" y="441.5" font-size="27.71" fill="#3A3A3A" textLength="28.4" lengthAdjust="spacingAndGlyphs">15</text>
<rect x="2589.1" y="420" width="29.4" height="24" fill="#FFFFFF"/>
<text x="2590.2" y="441.5" font-size="27.71" fill="#3A3A3A" textLength="28.4" lengthAdjust="spacingAndGlyphs">16</text>
<line x1="1440.6" y1="413" x2="1440.6" y2="450" stroke="#D05030" stroke-width="1.2" stroke-dasharray="2 1.5"/>
<line x1="505" y1="599.6" x2="510" y2="599.6" stroke="#A8A8A8" stroke-width="1.3"/>
<line x1="505" y1="623.2" x2="510" y2="623.2" stroke="#A8A8A8" stroke-width="1.3"/>
<line x1="502" y1="635.0" x2="513.8" y2="635.0" stroke="#444444" stroke-width="1.3"/>
<line x1="505" y1="646.9" x2="510" y2="646.9" stroke="#A8A8A8" stroke-width="1.3"/>
<line x1="505" y1="670.5" x2="510" y2="670.5" stroke="#A8A8A8" stroke-width="1.3"/>
<line x1="502" y1="682.3" x2="513.8" y2="682.3" stroke="#444444" stroke-width="1.3"/>
<line x1="505" y1="694.1" x2="510" y2="694.1" stroke="#A8A8A8" stroke-width="1.3"/>
<line x1="505" y1="717.8" x2="510" y2="717.8" stroke="#A8A8A8" stroke-width="1.3"/>
<line x1="502" y1="729.6" x2="513.8" y2="729.6" stroke="#444444" stroke-width="1.3"/>
<line x1="505" y1="741.4" x2="510" y2="741.4" stroke="#A8A8A8" stroke-width="1.3"/>
<line x1="505" y1="765.1" x2="510" y2="765.1" stroke="#A8A8A8" stroke-width="1.3"/>
<line x1="502" y1="776.9" x2="513.8" y2="776.9" stroke="#444444" stroke-width="1.3"/>
<line x1="505" y1="788.7" x2="510" y2="788.7" stroke="#A8A8A8" stroke-width="1.3"/>
<line x1="505" y1="812.4" x2="510" y2="812.4" stroke="#A8A8A8" stroke-width="1.3"/>
<line x1="502" y1="824.2" x2="513.8" y2="824.2" stroke="#444444" stroke-width="1.3"/>
<line x1="505" y1="836.0" x2="510" y2="836.0" stroke="#A8A8A8" stroke-width="1.3"/>
<line x1="505" y1="859.7" x2="510" y2="859.7" stroke="#A8A8A8" stroke-width="1.3"/>
<line x1="502" y1="871.5" x2="513.8" y2="871.5" stroke="#444444" stroke-width="1.3"/>
<line x1="505" y1="883.3" x2="510" y2="883.3" stroke="#A8A8A8" stroke-width="1.3"/>
<line x1="505" y1="907.0" x2="510" y2="907.0" stroke="#A8A8A8" stroke-width="1.3"/>
<line x1="502" y1="918.8" x2="513.8" y2="918.8" stroke="#444444" stroke-width="1.3"/>
<line x1="505" y1="930.6" x2="510" y2="930.6" stroke="#A8A8A8" stroke-width="1.3"/>
<line x1="505" y1="954.2" x2="510" y2="954.2" stroke="#A8A8A8" stroke-width="1.3"/>
<line x1="502" y1="966.1" x2="513.8" y2="966.1" stroke="#444444" stroke-width="1.3"/>
<line x1="505" y1="977.9" x2="510" y2="977.9" stroke="#A8A8A8" stroke-width="1.3"/>
<line x1="505" y1="1001.5" x2="510" y2="1001.5" stroke="#A8A8A8" stroke-width="1.3"/>
<line x1="502" y1="1013.4" x2="513.8" y2="1013.4" stroke="#444444" stroke-width="1.3"/>
<line x1="505" y1="1025.2" x2="510" y2="1025.2" stroke="#A8A8A8" stroke-width="1.3"/>
<line x1="505" y1="1048.8" x2="510" y2="1048.8" stroke="#A8A8A8" stroke-width="1.3"/>
<line x1="502" y1="1060.6" x2="513.8" y2="1060.6" stroke="#444444" stroke-width="1.3"/>
<line x1="505" y1="1072.5" x2="510" y2="1072.5" stroke="#A8A8A8" stroke-width="1.3"/>
<line x1="505" y1="1096.1" x2="510" y2="1096.1" stroke="#A8A8A8" stroke-width="1.3"/>
<line x1="502" y1="1107.9" x2="513.8" y2="1107.9" stroke="#444444" stroke-width="1.3"/>
<line x1="505" y1="1119.8" x2="510" y2="1119.8" stroke="#A8A8A8" stroke-width="1.3"/>
<line x1="505" y1="1143.4" x2="510" y2="1143.4" stroke="#A8A8A8" stroke-width="1.3"/>
<line x1="502" y1="1155.2" x2="513.8" y2="1155.2" stroke="#444444" stroke-width="1.3"/>
<line x1="505" y1="1167.0" x2="510" y2="1167.0" stroke="#A8A8A8" stroke-width="1.3"/>
<line x1="505" y1="1190.7" x2="510" y2="1190.7" stroke="#A8A8A8" stroke-width="1.3"/>
<line x1="502" y1="1202.5" x2="513.8" y2="1202.5" stroke="#444444" stroke-width="1.3"/>
<line x1="505" y1="1214.3" x2="510" y2="1214.3" stroke="#A8A8A8" stroke-width="1.3"/>
<line x1="505" y1="1238.0" x2="510" y2="1238.0" stroke="#A8A8A8" stroke-width="1.3"/>
<line x1="502" y1="1249.8" x2="513.8" y2="1249.8" stroke="#444444" stroke-width="1.3"/>
<line x1="505" y1="1261.6" x2="510" y2="1261.6" stroke="#A8A8A8" stroke-width="1.3"/>
<line x1="505" y1="1285.3" x2="510" y2="1285.3" stroke="#A8A8A8" stroke-width="1.3"/>
<line x1="502" y1="1297.1" x2="513.8" y2="1297.1" stroke="#444444" stroke-width="1.3"/>
<line x1="505" y1="1308.9" x2="510" y2="1308.9" stroke="#A8A8A8" stroke-width="1.3"/>
<line x1="505" y1="1332.6" x2="510" y2="1332.6" stroke="#A8A8A8" stroke-width="1.3"/>
<line x1="502" y1="1344.4" x2="513.8" y2="1344.4" stroke="#444444" stroke-width="1.3"/>
<line x1="505" y1="1356.2" x2="510" y2="1356.2" stroke="#A8A8A8" stroke-width="1.3"/>
<line x1="505" y1="1379.9" x2="510" y2="1379.9" stroke="#A8A8A8" stroke-width="1.3"/>
<line x1="502" y1="1391.7" x2="513.8" y2="1391.7" stroke="#444444" stroke-width="1.3"/>
<line x1="505" y1="1403.5" x2="510" y2="1403.5" stroke="#A8A8A8" stroke-width="1.3"/>
<line x1="505" y1="1427.1" x2="510" y2="1427.1" stroke="#A8A8A8" stroke-width="1.3"/>
<line x1="502" y1="1439.0" x2="513.8" y2="1439.0" stroke="#444444" stroke-width="1.3"/>
<line x1="505" y1="1450.8" x2="510" y2="1450.8" stroke="#A8A8A8" stroke-width="1.3"/>
<line x1="505" y1="1474.4" x2="510" y2="1474.4" stroke="#A8A8A8" stroke-width="1.3"/>
<rect x="496" y="603.1" width="26" height="16.6" fill="#FFFFFF"/>
<g transform="translate(517.5,611.4) rotate(-90)"><text x="-7.5" y="0.0" font-size="27.00" fill="#3A3A3A">9</text></g>
<rect x="496" y="650.3" width="26" height="16.8" fill="#FFFFFF"/>
<g transform="translate(517.5,658.7) rotate(-90)"><text x="-7.5" y="0.0" font-size="27.00" fill="#3A3A3A">8</text></g>
<rect x="496" y="697.8" width="26" height="16.3" fill="#FFFFFF"/>
<g transform="translate(517.5,706.0) rotate(-90)"><text x="-7.5" y="0.0" font-size="27.00" fill="#3A3A3A">7</text></g>
<rect x="496" y="745.0" width="26" height="16.6" fill="#FFFFFF"/>
<g transform="translate(517.5,753.3) rotate(-90)"><text x="-7.6" y="0.0" font-size="27.00" fill="#3A3A3A">6</text></g>
<rect x="496" y="792.1" width="26" height="16.8" fill="#FFFFFF"/>
<g transform="translate(517.5,800.5) rotate(-90)"><text x="-7.5" y="0.0" font-size="27.00" fill="#3A3A3A">5</text></g>
<rect x="496" y="839.0" width="26" height="17.8" fill="#FFFFFF"/>
<g transform="translate(517.5,847.8) rotate(-90)"><text x="-7.4" y="0.0" font-size="27.00" fill="#3A3A3A">4</text></g>
<rect x="496" y="886.6" width="26" height="17.0" fill="#FFFFFF"/>
<g transform="translate(517.5,895.1) rotate(-90)"><text x="-7.4" y="0.0" font-size="27.00" fill="#3A3A3A">3</text></g>
<rect x="496" y="934.3" width="26" height="16.3" fill="#FFFFFF"/>
<g transform="translate(517.5,942.4) rotate(-90)"><text x="-7.5" y="0.0" font-size="27.00" fill="#3A3A3A">2</text></g>
<rect x="496" y="981.8" width="26" height="15.7" fill="#FFFFFF"/>
<g transform="translate(517.5,989.7) rotate(-90)"><text x="-7.9" y="0.0" font-size="27.00" fill="#3A3A3A">1</text></g>
<rect x="496" y="1028.5" width="26" height="17.0" fill="#FFFFFF"/>
<g transform="translate(517.5,1037.0) rotate(-90)"><text x="-7.6" y="0.0" font-size="27.00" fill="#3A3A3A">0</text></g>
<rect x="496" y="1076.4" width="26" height="15.7" fill="#FFFFFF"/>
<g transform="translate(517.5,1084.3) rotate(-90)"><text x="-7.9" y="0.0" font-size="27.00" fill="#3A3A3A">1</text></g>
<rect x="496" y="1123.4" width="26" height="16.3" fill="#FFFFFF"/>
<g transform="translate(517.5,1131.6) rotate(-90)"><text x="-7.5" y="0.0" font-size="27.00" fill="#3A3A3A">2</text></g>
<rect x="496" y="1170.4" width="26" height="17.0" fill="#FFFFFF"/>
<g transform="translate(517.5,1178.9) rotate(-90)"><text x="-7.4" y="0.0" font-size="27.00" fill="#3A3A3A">3</text></g>
<rect x="496" y="1217.3" width="26" height="17.8" fill="#FFFFFF"/>
<g transform="translate(517.5,1226.2) rotate(-90)"><text x="-7.4" y="0.0" font-size="27.00" fill="#3A3A3A">4</text></g>
<rect x="496" y="1265.0" width="26" height="16.8" fill="#FFFFFF"/>
<g transform="translate(517.5,1273.5) rotate(-90)"><text x="-7.5" y="0.0" font-size="27.00" fill="#3A3A3A">5</text></g>
<rect x="496" y="1312.5" width="26" height="16.6" fill="#FFFFFF"/>
<g transform="translate(517.5,1320.7) rotate(-90)"><text x="-7.6" y="0.0" font-size="27.00" fill="#3A3A3A">6</text></g>
<rect x="496" y="1359.9" width="26" height="16.3" fill="#FFFFFF"/>
<g transform="translate(517.5,1368.0) rotate(-90)"><text x="-7.5" y="0.0" font-size="27.00" fill="#3A3A3A">7</text></g>
<rect x="496" y="1406.9" width="26" height="16.8" fill="#FFFFFF"/>
<g transform="translate(517.5,1415.3) rotate(-90)"><text x="-7.5" y="0.0" font-size="27.00" fill="#3A3A3A">8</text></g>
<rect x="496" y="1454.3" width="26" height="16.6" fill="#FFFFFF"/>
<g transform="translate(517.5,1462.6) rotate(-90)"><text x="-7.5" y="0.0" font-size="27.00" fill="#3A3A3A">9</text></g>
<line x1="490" y1="917" x2="527" y2="917" stroke="#D05030" stroke-width="1.2" stroke-dasharray="2 1.5"/>
<rect x="1046.5" y="586.5" width="1601" height="901" fill="#FFFFFF" stroke="#C8C8C8" stroke-width="1.2"/>
<circle cx="1841" cy="1036" r="128" fill="#000"/>
<rect x="-24.5" y="-45" width="49" height="90" rx="21" fill="#000000" transform="translate(1840.5,822) rotate(0)"/>
<rect x="-24.5" y="-45" width="49" height="90" rx="21" fill="#000000" transform="translate(1840.5,1249.5) rotate(0)"/>
<rect x="-24.5" y="-45" width="49" height="90" rx="21" fill="#000000" transform="translate(1629.3,1035.4) rotate(90)"/>
<rect x="-24.5" y="-45" width="49" height="90" rx="21" fill="#000000" transform="translate(2051.5,1035.4) rotate(90)"/>
<rect x="-24.5" y="-45" width="49" height="90" rx="21" fill="#000000" transform="translate(1691.3,884.7) rotate(-45)"/>
<rect x="-24.5" y="-45" width="49" height="90" rx="21" fill="#000000" transform="translate(1990.1,884.3) rotate(45)"/>
<rect x="-24.5" y="-45" width="49" height="90" rx="21" fill="#000000" transform="translate(1691.2,1186.6) rotate(45)"/>
<rect x="-24.5" y="-45" width="49" height="90" rx="21" fill="#000000" transform="translate(1990.1,1186.6) rotate(-45)"/>
<rect x="1583.5" y="763.3" width="527.0" height="546.7" fill="none" stroke="#A0A0A0" stroke-width="2"/>
<rect x="1711.0" y="903.5" width="259.0" height="262.5" fill="none" stroke="#A0A0A0" stroke-width="2"/>
<rect x="1814.3" y="775.3" width="52.1" height="93.1" fill="none" stroke="#A0A0A0" stroke-width="2"/>
<rect x="1814.6" y="1203.0" width="51.8" height="93.0" fill="none" stroke="#A0A0A0" stroke-width="2"/>
<rect x="1583.3" y="1008.7" width="92.0" height="53.3" fill="none" stroke="#A0A0A0" stroke-width="2"/>
<rect x="2005.6" y="1008.7" width="91.9" height="53.3" fill="none" stroke="#A0A0A0" stroke-width="2"/>
<rect x="1651.5" y="844.3" width="79.7" height="80.9" fill="none" stroke="#A0A0A0" stroke-width="2"/>
<rect x="1949.7" y="843.9" width="80.8" height="80.8" fill="none" stroke="#A0A0A0" stroke-width="2"/>
<rect x="1651.2" y="1146.0" width="80.0" height="81.0" fill="none" stroke="#A0A0A0" stroke-width="2"/>
<rect x="1949.7" y="1146.0" width="80.8" height="81.0" fill="none" stroke="#A0A0A0" stroke-width="2"/>
<line x1="1840.7" y1="716" x2="1840.7" y2="775" stroke="#A0A0A0" stroke-width="2"/>
<line x1="1846.8" y1="705" x2="1846.8" y2="763" stroke="#A0A0A0" stroke-width="2"/>
<line x1="1840.7" y1="845" x2="1840.7" y2="904" stroke="#A0A0A0" stroke-width="2"/>
<line x1="1691.3" y1="784" x2="1691.3" y2="844" stroke="#A0A0A0" stroke-width="2"/>
<line x1="1691.3" y1="925" x2="1691.3" y2="992" stroke="#A0A0A0" stroke-width="2"/>
<line x1="1990.4" y1="784" x2="1990.4" y2="844" stroke="#A0A0A0" stroke-width="2"/>
<line x1="1990.4" y1="925" x2="1990.4" y2="992" stroke="#A0A0A0" stroke-width="2"/>
<line x1="1629.7" y1="951" x2="1629.7" y2="1009" stroke="#A0A0A0" stroke-width="2"/>
<line x1="1629" y1="1062" x2="1629" y2="1129" stroke="#A0A0A0" stroke-width="2"/>
<line x1="2052" y1="950" x2="2052" y2="1009" stroke="#A0A0A0" stroke-width="2"/>
<line x1="2052" y1="1062" x2="2052" y2="1129" stroke="#A0A0A0" stroke-width="2"/>
<line x1="1840.5" y1="904" x2="1840.5" y2="935" stroke="#A0A0A0" stroke-width="2"/>
<line x1="1840.5" y1="1143" x2="1840.5" y2="1166" stroke="#A0A0A0" stroke-width="2"/>
<line x1="1691.3" y1="1087" x2="1691.3" y2="1146" stroke="#A0A0A0" stroke-width="2"/>
<line x1="1691.3" y1="1227" x2="1691.3" y2="1295" stroke="#A0A0A0" stroke-width="2"/>
<line x1="1990.4" y1="1087" x2="1990.4" y2="1146" stroke="#A0A0A0" stroke-width="2"/>
<line x1="1990.4" y1="1227" x2="1990.4" y2="1295" stroke="#A0A0A0" stroke-width="2"/>
<line x1="1840.4" y1="1166" x2="1840.4" y2="1203" stroke="#A0A0A0" stroke-width="2"/>
<line x1="1840.4" y1="1296" x2="1840.4" y2="1362" stroke="#A0A0A0" stroke-width="2"/>
<polygon points="1841.0,936.0 1854.0,949.5 1845.2,949.5 1845.2,961.0 1836.8,961.0 1836.8,949.5 1828.0,949.5" fill="#FFFFFF" stroke="#969696" stroke-width="3.2" stroke-linejoin="miter"/><polygon points="1875.0,970.0 1861.5,983.0 1861.5,974.2 1850.0,974.2 1850.0,965.8 1861.5,965.8 1861.5,957.0" fill="#FFFFFF" stroke="#969696" stroke-width="3.2" stroke-linejoin="miter"/><polygon points="1841.0,1004.0 1828.0,990.5 1836.8,990.5 1836.8,979.0 1845.2,979.0 1845.2,990.5 1854.0,990.5" fill="#FFFFFF" stroke="#969696" stroke-width="3.2" stroke-linejoin="miter"/><polygon points="1807.0,970.0 1820.5,957.0 1820.5,965.8 1832.0,965.8 1832.0,974.2 1820.5,974.2 1820.5,983.0" fill="#FFFFFF" stroke="#969696" stroke-width="3.2" stroke-linejoin="miter"/>
<polygon points="1691.3,993.0 1704.3,1006.5 1695.5,1006.5 1695.5,1018.0 1687.1,1018.0 1687.1,1006.5 1678.3,1006.5" fill="#FFFFFF" stroke="#969696" stroke-width="3.2" stroke-linejoin="miter"/><polygon points="1725.3,1027.0 1711.8,1040.0 1711.8,1031.2 1700.3,1031.2 1700.3,1022.8 1711.8,1022.8 1711.8,1014.0" fill="#FFFFFF" stroke="#969696" stroke-width="3.2" stroke-linejoin="miter"/><polygon points="1691.3,1061.0 1678.3,1047.5 1687.1,1047.5 1687.1,1036.0 1695.5,1036.0 1695.5,1047.5 1704.3,1047.5" fill="#FFFFFF" stroke="#969696" stroke-width="3.2" stroke-linejoin="miter"/><polygon points="1657.3,1027.0 1670.8,1014.0 1670.8,1022.8 1682.3,1022.8 1682.3,1031.2 1670.8,1031.2 1670.8,1040.0" fill="#FFFFFF" stroke="#969696" stroke-width="3.2" stroke-linejoin="miter"/>
<polygon points="1990.4,992.0 2003.4,1005.5 1994.6,1005.5 1994.6,1017.0 1986.2,1017.0 1986.2,1005.5 1977.4,1005.5" fill="#FFFFFF" stroke="#969696" stroke-width="3.2" stroke-linejoin="miter"/><polygon points="2024.4,1026.0 2010.9,1039.0 2010.9,1030.2 1999.4,1030.2 1999.4,1021.8 2010.9,1021.8 2010.9,1013.0" fill="#FFFFFF" stroke="#969696" stroke-width="3.2" stroke-linejoin="miter"/><polygon points="1990.4,1060.0 1977.4,1046.5 1986.2,1046.5 1986.2,1035.0 1994.6,1035.0 1994.6,1046.5 2003.4,1046.5" fill="#FFFFFF" stroke="#969696" stroke-width="3.2" stroke-linejoin="miter"/><polygon points="1956.4,1026.0 1969.9,1013.0 1969.9,1021.8 1981.4,1021.8 1981.4,1030.2 1969.9,1030.2 1969.9,1039.0" fill="#FFFFFF" stroke="#969696" stroke-width="3.2" stroke-linejoin="miter"/>
<polygon points="1629.0,1129.3 1642.0,1142.8 1633.2,1142.8 1633.2,1154.3 1624.8,1154.3 1624.8,1142.8 1616.0,1142.8" fill="#FFFFFF" stroke="#969696" stroke-width="3.2" stroke-linejoin="miter"/><polygon points="1663.0,1163.3 1649.5,1176.3 1649.5,1167.5 1638.0,1167.5 1638.0,1159.1 1649.5,1159.1 1649.5,1150.3" fill="#FFFFFF" stroke="#969696" stroke-width="3.2" stroke-linejoin="miter"/><polygon points="1629.0,1197.3 1616.0,1183.8 1624.8,1183.8 1624.8,1172.3 1633.2,1172.3 1633.2,1183.8 1642.0,1183.8" fill="#FFFFFF" stroke="#969696" stroke-width="3.2" stroke-linejoin="miter"/><polygon points="1595.0,1163.3 1608.5,1150.3 1608.5,1159.1 1620.0,1159.1 1620.0,1167.5 1608.5,1167.5 1608.5,1176.3" fill="#FFFFFF" stroke="#969696" stroke-width="3.2" stroke-linejoin="miter"/>
<polygon points="2052.0,1129.3 2065.0,1142.8 2056.2,1142.8 2056.2,1154.3 2047.8,1154.3 2047.8,1142.8 2039.0,1142.8" fill="#FFFFFF" stroke="#969696" stroke-width="3.2" stroke-linejoin="miter"/><polygon points="2086.0,1163.3 2072.5,1176.3 2072.5,1167.5 2061.0,1167.5 2061.0,1159.1 2072.5,1159.1 2072.5,1150.3" fill="#FFFFFF" stroke="#969696" stroke-width="3.2" stroke-linejoin="miter"/><polygon points="2052.0,1197.3 2039.0,1183.8 2047.8,1183.8 2047.8,1172.3 2056.2,1172.3 2056.2,1183.8 2065.0,1183.8" fill="#FFFFFF" stroke="#969696" stroke-width="3.2" stroke-linejoin="miter"/><polygon points="2018.0,1163.3 2031.5,1150.3 2031.5,1159.1 2043.0,1159.1 2043.0,1167.5 2031.5,1167.5 2031.5,1176.3" fill="#FFFFFF" stroke="#969696" stroke-width="3.2" stroke-linejoin="miter"/>
<polygon points="1691.3,1295.0 1704.3,1308.5 1695.5,1308.5 1695.5,1320.0 1687.1,1320.0 1687.1,1308.5 1678.3,1308.5" fill="#FFFFFF" stroke="#969696" stroke-width="3.2" stroke-linejoin="miter"/><polygon points="1725.3,1329.0 1711.8,1342.0 1711.8,1333.2 1700.3,1333.2 1700.3,1324.8 1711.8,1324.8 1711.8,1316.0" fill="#FFFFFF" stroke="#969696" stroke-width="3.2" stroke-linejoin="miter"/><polygon points="1691.3,1363.0 1678.3,1349.5 1687.1,1349.5 1687.1,1338.0 1695.5,1338.0 1695.5,1349.5 1704.3,1349.5" fill="#FFFFFF" stroke="#969696" stroke-width="3.2" stroke-linejoin="miter"/><polygon points="1657.3,1329.0 1670.8,1316.0 1670.8,1324.8 1682.3,1324.8 1682.3,1333.2 1670.8,1333.2 1670.8,1342.0" fill="#FFFFFF" stroke="#969696" stroke-width="3.2" stroke-linejoin="miter"/>
<polygon points="1990.4,1295.0 2003.4,1308.5 1994.6,1308.5 1994.6,1320.0 1986.2,1320.0 1986.2,1308.5 1977.4,1308.5" fill="#FFFFFF" stroke="#969696" stroke-width="3.2" stroke-linejoin="miter"/><polygon points="2024.4,1329.0 2010.9,1342.0 2010.9,1333.2 1999.4,1333.2 1999.4,1324.8 2010.9,1324.8 2010.9,1316.0" fill="#FFFFFF" stroke="#969696" stroke-width="3.2" stroke-linejoin="miter"/><polygon points="1990.4,1363.0 1977.4,1349.5 1986.2,1349.5 1986.2,1338.0 1994.6,1338.0 1994.6,1349.5 2003.4,1349.5" fill="#FFFFFF" stroke="#969696" stroke-width="3.2" stroke-linejoin="miter"/><polygon points="1956.4,1329.0 1969.9,1316.0 1969.9,1324.8 1981.4,1324.8 1981.4,1333.2 1969.9,1333.2 1969.9,1342.0" fill="#FFFFFF" stroke="#969696" stroke-width="3.2" stroke-linejoin="miter"/>
<polygon points="1840.4,1363.5 1853.4,1377.0 1844.6,1377.0 1844.6,1388.5 1836.2,1388.5 1836.2,1377.0 1827.4,1377.0" fill="#FFFFFF" stroke="#969696" stroke-width="3.2" stroke-linejoin="miter"/><polygon points="1874.4,1397.5 1860.9,1410.5 1860.9,1401.7 1849.4,1401.7 1849.4,1393.3 1860.9,1393.3 1860.9,1384.5" fill="#FFFFFF" stroke="#969696" stroke-width="3.2" stroke-linejoin="miter"/><polygon points="1840.4,1431.5 1827.4,1418.0 1836.2,1418.0 1836.2,1406.5 1844.6,1406.5 1844.6,1418.0 1853.4,1418.0" fill="#FFFFFF" stroke="#969696" stroke-width="3.2" stroke-linejoin="miter"/><polygon points="1806.4,1397.5 1819.9,1384.5 1819.9,1393.3 1831.4,1393.3 1831.4,1401.7 1819.9,1401.7 1819.9,1410.5" fill="#FFFFFF" stroke="#969696" stroke-width="3.2" stroke-linejoin="miter"/>
<path d="M1858.4 695.5 A18.7 18.7 0 1 1 1866.6 679.0 V681.0" fill="none" stroke="#969696" stroke-width="14"/><path d="M1858.4 695.5 A18.7 18.7 0 1 1 1866.6 679.0 V681.0" fill="none" stroke="#FFFFFF" stroke-width="4.5"/><polygon points="1849.4,680 1882.9,680 1866.4,696.2" fill="#FFFFFF" stroke="#969696" stroke-width="3.9" stroke-linejoin="miter"/><path d="M1864.8 672.1 A18.7 18.7 0 0 1 1866.6 679.0 V684.0" fill="none" stroke="#FFFFFF" stroke-width="4.5"/>
<path d="M1852.2 707.5 A18.7 18.7 0 1 1 1860.4 691.0 V693.0" fill="none" stroke="#969696" stroke-width="14"/><path d="M1852.2 707.5 A18.7 18.7 0 1 1 1860.4 691.0 V693.0" fill="none" stroke="#FFFFFF" stroke-width="4.5"/><polygon points="1843.2,692 1876.7,692 1860.2,708.2" fill="#FFFFFF" stroke="#969696" stroke-width="3.9" stroke-linejoin="miter"/><path d="M1858.6 684.1 A18.7 18.7 0 0 1 1860.4 691.0 V696.0" fill="none" stroke="#FFFFFF" stroke-width="4.5"/>
<path d="M1701.8 774.1 A18.7 18.7 0 1 1 1710.0 757.6 V759.6" fill="none" stroke="#969696" stroke-width="14"/><path d="M1701.8 774.1 A18.7 18.7 0 1 1 1710.0 757.6 V759.6" fill="none" stroke="#FFFFFF" stroke-width="4.5"/><polygon points="1692.8,758.6 1726.3,758.6 1709.8,774.8000000000001" fill="#FFFFFF" stroke="#969696" stroke-width="3.9" stroke-linejoin="miter"/><path d="M1708.2 750.7 A18.7 18.7 0 0 1 1710.0 757.6 V762.6" fill="none" stroke="#FFFFFF" stroke-width="4.5"/>
<path d="M2000.9 774.3 A18.7 18.7 0 1 1 2009.1 757.8 V759.8" fill="none" stroke="#969696" stroke-width="14"/><path d="M2000.9 774.3 A18.7 18.7 0 1 1 2009.1 757.8 V759.8" fill="none" stroke="#FFFFFF" stroke-width="4.5"/><polygon points="1991.9,758.8 2025.4,758.8 2008.9,775.0" fill="#FFFFFF" stroke="#969696" stroke-width="3.9" stroke-linejoin="miter"/><path d="M2007.3 750.9 A18.7 18.7 0 0 1 2009.1 757.8 V762.8" fill="none" stroke="#FFFFFF" stroke-width="4.5"/>
<path d="M1640.2 940.7 A18.7 18.7 0 1 1 1648.4 924.2 V926.2" fill="none" stroke="#969696" stroke-width="14"/><path d="M1640.2 940.7 A18.7 18.7 0 1 1 1648.4 924.2 V926.2" fill="none" stroke="#FFFFFF" stroke-width="4.5"/><polygon points="1631.2,925.2 1664.7,925.2 1648.2,941.4000000000001" fill="#FFFFFF" stroke="#969696" stroke-width="3.9" stroke-linejoin="miter"/><path d="M1646.6 917.3 A18.7 18.7 0 0 1 1648.4 924.2 V929.2" fill="none" stroke="#FFFFFF" stroke-width="4.5"/>
<path d="M2062.5 940.2 A18.7 18.7 0 1 1 2070.7 923.7 V925.7" fill="none" stroke="#969696" stroke-width="14"/><path d="M2062.5 940.2 A18.7 18.7 0 1 1 2070.7 923.7 V925.7" fill="none" stroke="#FFFFFF" stroke-width="4.5"/><polygon points="2053.5,924.7 2087,924.7 2070.5,940.9000000000001" fill="#FFFFFF" stroke="#969696" stroke-width="3.9" stroke-linejoin="miter"/><path d="M2068.9 916.8 A18.7 18.7 0 0 1 2070.7 923.7 V928.7" fill="none" stroke="#FFFFFF" stroke-width="4.5"/>
<path d="M1701.8 1077.5 A18.7 18.7 0 1 1 1710.0 1061.0 V1063.0" fill="none" stroke="#969696" stroke-width="14"/><path d="M1701.8 1077.5 A18.7 18.7 0 1 1 1710.0 1061.0 V1063.0" fill="none" stroke="#FFFFFF" stroke-width="4.5"/><polygon points="1692.8,1062 1726.3,1062 1709.8,1078.2" fill="#FFFFFF" stroke="#969696" stroke-width="3.9" stroke-linejoin="miter"/><path d="M1708.2 1054.1 A18.7 18.7 0 0 1 1710.0 1061.0 V1066.0" fill="none" stroke="#FFFFFF" stroke-width="4.5"/>
<path d="M2000.9 1077.5 A18.7 18.7 0 1 1 2009.1 1061.0 V1063.0" fill="none" stroke="#969696" stroke-width="14"/><path d="M2000.9 1077.5 A18.7 18.7 0 1 1 2009.1 1061.0 V1063.0" fill="none" stroke="#FFFFFF" stroke-width="4.5"/><polygon points="1991.9,1062 2025.4,1062 2008.9,1078.2" fill="#FFFFFF" stroke="#969696" stroke-width="3.9" stroke-linejoin="miter"/><path d="M2007.3 1054.1 A18.7 18.7 0 0 1 2009.1 1061.0 V1066.0" fill="none" stroke="#FFFFFF" stroke-width="4.5"/>
<path d="M1851.5 1133.5 A18.7 18.7 0 1 1 1859.7 1117.0 V1119.0" fill="none" stroke="#969696" stroke-width="14"/><path d="M1851.5 1133.5 A18.7 18.7 0 1 1 1859.7 1117.0 V1119.0" fill="none" stroke="#FFFFFF" stroke-width="4.5"/><polygon points="1842.5,1118 1876,1118 1859.5,1134.2" fill="#FFFFFF" stroke="#969696" stroke-width="3.9" stroke-linejoin="miter"/><path d="M1857.9 1110.1 A18.7 18.7 0 0 1 1859.7 1117.0 V1122.0" fill="none" stroke="#FFFFFF" stroke-width="4.5"/>
<circle cx="1583.5" cy="763.3" r="11.4" fill="#FFFFFF" stroke="#969696" stroke-width="3.8"/><circle cx="2110.5" cy="763.3" r="11.4" fill="#FFFFFF" stroke="#969696" stroke-width="3.8"/><circle cx="1583.5" cy="1310.0" r="11.4" fill="#FFFFFF" stroke="#969696" stroke-width="3.8"/><circle cx="2110.5" cy="1310.0" r="11.4" fill="#FFFFFF" stroke="#969696" stroke-width="3.8"/><circle cx="1847.0" cy="763.3" r="11.4" fill="#FFFFFF" stroke="#969696" stroke-width="3.8"/><circle cx="1847.0" cy="1310.0" r="11.4" fill="#FFFFFF" stroke="#969696" stroke-width="3.8"/><circle cx="1583.5" cy="1036.7" r="11.4" fill="#FFFFFF" stroke="#969696" stroke-width="3.8"/><circle cx="2110.5" cy="1036.7" r="11.4" fill="#FFFFFF" stroke="#969696" stroke-width="3.8"/>
<circle cx="1711.0" cy="903.5" r="11.4" fill="#FFFFFF" stroke="#969696" stroke-width="3.8"/><circle cx="1970.0" cy="903.5" r="11.4" fill="#FFFFFF" stroke="#969696" stroke-width="3.8"/><circle cx="1711.0" cy="1166.0" r="11.4" fill="#FFFFFF" stroke="#969696" stroke-width="3.8"/><circle cx="1970.0" cy="1166.0" r="11.4" fill="#FFFFFF" stroke="#969696" stroke-width="3.8"/><circle cx="1840.5" cy="903.5" r="11.4" fill="#FFFFFF" stroke="#969696" stroke-width="3.8"/><circle cx="1840.5" cy="1166.0" r="11.4" fill="#FFFFFF" stroke="#969696" stroke-width="3.8"/><circle cx="1711.0" cy="1034.8" r="11.4" fill="#FFFFFF" stroke="#969696" stroke-width="3.8"/><circle cx="1970.0" cy="1034.8" r="11.4" fill="#FFFFFF" stroke="#969696" stroke-width="3.8"/>
<circle cx="1651.5" cy="844.3" r="11.4" fill="#FFFFFF" stroke="#969696" stroke-width="3.8"/><circle cx="1731.2" cy="844.3" r="11.4" fill="#FFFFFF" stroke="#969696" stroke-width="3.8"/><circle cx="1651.5" cy="925.2" r="11.4" fill="#FFFFFF" stroke="#969696" stroke-width="3.8"/><circle cx="1731.2" cy="925.2" r="11.4" fill="#FFFFFF" stroke="#969696" stroke-width="3.8"/><circle cx="1691.3" cy="844.3" r="11.4" fill="#FFFFFF" stroke="#969696" stroke-width="3.8"/><circle cx="1691.3" cy="925.2" r="11.4" fill="#FFFFFF" stroke="#969696" stroke-width="3.8"/><circle cx="1651.5" cy="884.8" r="11.4" fill="#FFFFFF" stroke="#969696" stroke-width="3.8"/><circle cx="1731.2" cy="884.8" r="11.4" fill="#FFFFFF" stroke="#969696" stroke-width="3.8"/>
<circle cx="1949.7" cy="843.9" r="11.4" fill="#FFFFFF" stroke="#969696" stroke-width="3.8"/><circle cx="2030.5" cy="843.9" r="11.4" fill="#FFFFFF" stroke="#969696" stroke-width="3.8"/><circle cx="1949.7" cy="924.7" r="11.4" fill="#FFFFFF" stroke="#969696" stroke-width="3.8"/><circle cx="2030.5" cy="924.7" r="11.4" fill="#FFFFFF" stroke="#969696" stroke-width="3.8"/><circle cx="1990.1" cy="843.9" r="11.4" fill="#FFFFFF" stroke="#969696" stroke-width="3.8"/><circle cx="1990.1" cy="924.7" r="11.4" fill="#FFFFFF" stroke="#969696" stroke-width="3.8"/><circle cx="1949.7" cy="884.3" r="11.4" fill="#FFFFFF" stroke="#969696" stroke-width="3.8"/><circle cx="2030.5" cy="884.3" r="11.4" fill="#FFFFFF" stroke="#969696" stroke-width="3.8"/>
<circle cx="1651.2" cy="1146.0" r="11.4" fill="#FFFFFF" stroke="#969696" stroke-width="3.8"/><circle cx="1731.2" cy="1146.0" r="11.4" fill="#FFFFFF" stroke="#969696" stroke-width="3.8"/><circle cx="1651.2" cy="1227.0" r="11.4" fill="#FFFFFF" stroke="#969696" stroke-width="3.8"/><circle cx="1731.2" cy="1227.0" r="11.4" fill="#FFFFFF" stroke="#969696" stroke-width="3.8"/><circle cx="1691.2" cy="1146.0" r="11.4" fill="#FFFFFF" stroke="#969696" stroke-width="3.8"/><circle cx="1691.2" cy="1227.0" r="11.4" fill="#FFFFFF" stroke="#969696" stroke-width="3.8"/><circle cx="1651.2" cy="1186.5" r="11.4" fill="#FFFFFF" stroke="#969696" stroke-width="3.8"/><circle cx="1731.2" cy="1186.5" r="11.4" fill="#FFFFFF" stroke="#969696" stroke-width="3.8"/>
<circle cx="1949.7" cy="1146.0" r="11.4" fill="#FFFFFF" stroke="#969696" stroke-width="3.8"/><circle cx="2030.5" cy="1146.0" r="11.4" fill="#FFFFFF" stroke="#969696" stroke-width="3.8"/><circle cx="1949.7" cy="1227.0" r="11.4" fill="#FFFFFF" stroke="#969696" stroke-width="3.8"/><circle cx="2030.5" cy="1227.0" r="11.4" fill="#FFFFFF" stroke="#969696" stroke-width="3.8"/><circle cx="1990.1" cy="1146.0" r="11.4" fill="#FFFFFF" stroke="#969696" stroke-width="3.8"/><circle cx="1990.1" cy="1227.0" r="11.4" fill="#FFFFFF" stroke="#969696" stroke-width="3.8"/><circle cx="1949.7" cy="1186.5" r="11.4" fill="#FFFFFF" stroke="#969696" stroke-width="3.8"/><circle cx="2030.5" cy="1186.5" r="11.4" fill="#FFFFFF" stroke="#969696" stroke-width="3.8"/>
<circle cx="1583.3" cy="1008.7" r="11.4" fill="#FFFFFF" stroke="#969696" stroke-width="3.8"/><circle cx="1675.3" cy="1008.7" r="11.4" fill="#FFFFFF" stroke="#969696" stroke-width="3.8"/><circle cx="1583.3" cy="1062.0" r="11.4" fill="#FFFFFF" stroke="#969696" stroke-width="3.8"/><circle cx="1675.3" cy="1062.0" r="11.4" fill="#FFFFFF" stroke="#969696" stroke-width="3.8"/><circle cx="1629.3" cy="1008.7" r="11.4" fill="#FFFFFF" stroke="#969696" stroke-width="3.8"/><circle cx="1629.3" cy="1062.0" r="11.4" fill="#FFFFFF" stroke="#969696" stroke-width="3.8"/>
<circle cx="2005.6" cy="1008.7" r="11.4" fill="#FFFFFF" stroke="#969696" stroke-width="3.8"/><circle cx="2097.5" cy="1008.7" r="11.4" fill="#FFFFFF" stroke="#969696" stroke-width="3.8"/><circle cx="2005.6" cy="1062.0" r="11.4" fill="#FFFFFF" stroke="#969696" stroke-width="3.8"/><circle cx="2097.5" cy="1062.0" r="11.4" fill="#FFFFFF" stroke="#969696" stroke-width="3.8"/><circle cx="2051.6" cy="1008.7" r="11.4" fill="#FFFFFF" stroke="#969696" stroke-width="3.8"/><circle cx="2051.6" cy="1062.0" r="11.4" fill="#FFFFFF" stroke="#969696" stroke-width="3.8"/>
<circle cx="1814.6" cy="1203.0" r="11.4" fill="#FFFFFF" stroke="#969696" stroke-width="3.8"/><circle cx="1866.4" cy="1203.0" r="11.4" fill="#FFFFFF" stroke="#969696" stroke-width="3.8"/><circle cx="1814.6" cy="1296.0" r="11.4" fill="#FFFFFF" stroke="#969696" stroke-width="3.8"/><circle cx="1866.4" cy="1296.0" r="11.4" fill="#FFFFFF" stroke="#969696" stroke-width="3.8"/><circle cx="1814.6" cy="1249.5" r="11.4" fill="#FFFFFF" stroke="#969696" stroke-width="3.8"/><circle cx="1866.4" cy="1249.5" r="11.4" fill="#FFFFFF" stroke="#969696" stroke-width="3.8"/>
<circle cx="1814.3" cy="775.3" r="11.4" fill="#FFFFFF" stroke="#969696" stroke-width="3.8"/><circle cx="1866.4" cy="775.3" r="11.4" fill="#FFFFFF" stroke="#969696" stroke-width="3.8"/><circle cx="1814.3" cy="868.4" r="11.4" fill="#FFFFFF" stroke="#969696" stroke-width="3.8"/><circle cx="1866.4" cy="868.4" r="11.4" fill="#FFFFFF" stroke="#969696" stroke-width="3.8"/><circle cx="1814.3" cy="821.8" r="11.4" fill="#FFFFFF" stroke="#969696" stroke-width="3.8"/><circle cx="1866.4" cy="821.8" r="11.4" fill="#FFFFFF" stroke="#969696" stroke-width="3.8"/>
<path d="M1851.2 835.3 A18.7 18.7 0 1 1 1859.4 818.8 V820.8" fill="none" stroke="#969696" stroke-width="14"/><path d="M1851.2 835.3 A18.7 18.7 0 1 1 1859.4 818.8 V820.8" fill="none" stroke="#FFFFFF" stroke-width="4.5"/><polygon points="1842.2,819.8 1875.7,819.8 1859.2,836.0" fill="#FFFFFF" stroke="#969696" stroke-width="3.9" stroke-linejoin="miter"/><path d="M1857.6 811.9 A18.7 18.7 0 0 1 1859.4 818.8 V823.8" fill="none" stroke="#FFFFFF" stroke-width="4.5"/>
<rect x="3158" y="408" width="41" height="872" fill="#DADADA"/>
<rect x="3158.6" y="1280.6" width="41" height="290.4" fill="#FFFFFF" stroke="#ABABAB" stroke-width="1.3"/>
<g font-family="Liberation Sans">
<text x="1784.3" y="49.0" font-size="28.99" fill="#EFC3B5" textLength="169.7" lengthAdjust="spacingAndGlyphs">Drawing Tools</text>
<text x="1975.7" y="50.0" font-size="30.43" fill="#FFFFFF" textLength="180.4" lengthAdjust="spacingAndGlyphs">Presentation1</text>
<text x="2202.2" y="50.0" font-size="30.43" fill="#FFFFFF" textLength="150.8" lengthAdjust="spacingAndGlyphs">PowerPoint</text>
<rect x="2177" y="41" width="8.5" height="1.8" fill="#FFFFFF"/>
<text x="2599.7" y="43.0" font-size="30.43" fill="#FFFFFF" textLength="223.8" lengthAdjust="spacingAndGlyphs">Maurizio La Cava</text>
<text x="56.4" y="129.0" font-size="30.43" fill="#FFFFFF" textLength="46.8" lengthAdjust="spacingAndGlyphs">File</text>
<text x="341.3" y="129.0" font-size="30.43" fill="#FFFFFF" textLength="75.9" lengthAdjust="spacingAndGlyphs">Insert</text>
<text x="479.6" y="129.0" font-size="30.43" fill="#FFFFFF" textLength="68.9" lengthAdjust="spacingAndGlyphs">Draw</text>
<text x="611.6" y="129.0" font-size="30.43" fill="#FFFFFF" textLength="94.3" lengthAdjust="spacingAndGlyphs">Design</text>
<text x="768.1" y="129.0" font-size="30.43" fill="#FFFFFF" textLength="141.9" lengthAdjust="spacingAndGlyphs">Transitions</text>
<text x="973.0" y="129.0" font-size="30.43" fill="#FFFFFF" textLength="148.9" lengthAdjust="spacingAndGlyphs">Animations</text>
<text x="1185.2" y="129.0" font-size="30.43" fill="#FFFFFF" textLength="145.3" lengthAdjust="spacingAndGlyphs">Slide Show</text>
<text x="1393.8" y="129.0" font-size="30.43" fill="#FFFFFF" textLength="92.2" lengthAdjust="spacingAndGlyphs">Review</text>
<text x="1551.5" y="129.0" font-size="30.43" fill="#FFFFFF" textLength="63.0" lengthAdjust="spacingAndGlyphs">View</text>
<text x="1677.7" y="129.0" font-size="30.43" fill="#FFFFFF" textLength="60.1" lengthAdjust="spacingAndGlyphs">MLC</text>
<text x="1820.6" y="129.0" font-size="30.43" fill="#FFFFFF" textLength="94.6" lengthAdjust="spacingAndGlyphs">Format</text>
<text x="196.5" y="129.0" font-size="30.43" fill="#B7472A" textLength="82.6" lengthAdjust="spacingAndGlyphs">Home</text>
<text x="2022.1" y="130.0" font-size="30.43" fill="#F6DDD5" textLength="377.8" lengthAdjust="spacingAndGlyphs">Tell me what you want to do</text>
<text x="3003.7" y="130.0" font-size="30.43" fill="#FFFFFF" textLength="74.5" lengthAdjust="spacingAndGlyphs">Share</text>
<text x="28.2" y="307.6" font-size="29.86" fill="#444444" textLength="71.0" lengthAdjust="spacingAndGlyphs">Paste</text>
<text x="263.6" y="307.6" font-size="29.86" fill="#444444" textLength="60.3" lengthAdjust="spacingAndGlyphs">New</text>
<text x="252.7" y="347.8" font-size="30.43" fill="#444444" textLength="64.4" lengthAdjust="spacingAndGlyphs">Slide</text>
<text x="416.6" y="208.7" font-size="28.99" fill="#444444" textLength="91.3" lengthAdjust="spacingAndGlyphs">Layout</text>
<text x="416.8" y="275.6" font-size="29.28" fill="#444444" textLength="73.2" lengthAdjust="spacingAndGlyphs">Reset</text>
<text x="417.7" y="341.7" font-size="28.99" fill="#444444" textLength="98.9" lengthAdjust="spacingAndGlyphs">Section</text>
<text x="563.5" y="230.3" font-size="30.87" fill="#333333" textLength="178.1" lengthAdjust="spacingAndGlyphs">Calibri (Body)</text>
<text x="950.8" y="230.3" font-size="30.87" fill="#333333" textLength="32.1" lengthAdjust="spacingAndGlyphs">18</text>
<text x="2316.0" y="296.9" font-size="30.43" fill="#444444" textLength="104.3" lengthAdjust="spacingAndGlyphs">Arrange</text>
<text x="2443.7" y="297.0" font-size="30.43" fill="#444444" textLength="75.4" lengthAdjust="spacingAndGlyphs">Quick</text>
<text x="2433.7" y="336.8" font-size="28.26" fill="#444444" textLength="76.0" lengthAdjust="spacingAndGlyphs">Styles</text>
<text x="2602.7" y="201.0" font-size="30.43" fill="#444444" textLength="126.6" lengthAdjust="spacingAndGlyphs">Shape Fill</text>
<text x="2602.7" y="262.0" font-size="28.26" fill="#444444" textLength="187.6" lengthAdjust="spacingAndGlyphs">Shape Outline</text>
<text x="2605.5" y="327.2" font-size="28.26" fill="#444444" textLength="176.8" lengthAdjust="spacingAndGlyphs">Shape Effects</text>
<text x="2897.6" y="204.0" font-size="31.16" fill="#444444" textLength="58.2" lengthAdjust="spacingAndGlyphs">Find</text>
<text x="2895.4" y="265.7" font-size="30.43" fill="#444444" textLength="103.7" lengthAdjust="spacingAndGlyphs">Replace</text>
<text x="2898.7" y="327.9" font-size="31.01" fill="#444444" textLength="79.6" lengthAdjust="spacingAndGlyphs">Select</text>
<text x="36.0" y="397.8" font-size="27.25" fill="#666666" textLength="119.7" lengthAdjust="spacingAndGlyphs">Clipboard</text>
<text x="356.4" y="397.8" font-size="27.25" fill="#666666" textLength="69.8" lengthAdjust="spacingAndGlyphs">Slides</text>
<text x="870.4" y="397.8" font-size="27.25" fill="#666666" textLength="53.4" lengthAdjust="spacingAndGlyphs">Font</text>
<text x="1450.9" y="397.8" font-size="27.25" fill="#666666" textLength="123.4" lengthAdjust="spacingAndGlyphs">Paragraph</text>
<text x="2232.8" y="397.8" font-size="27.25" fill="#666666" textLength="100.9" lengthAdjust="spacingAndGlyphs">Drawing</text>
<text x="2895.8" y="397.8" font-size="27.25" fill="#666666" textLength="85.8" lengthAdjust="spacingAndGlyphs">Editing</text>
<text x="1070.0" y="234.0" font-size="38.41" fill="#6A6A6A" textLength="23.1" lengthAdjust="spacingAndGlyphs">A</text>
<text x="1151.0" y="234.0" font-size="27.54" fill="#6A6A6A" textLength="18.1" lengthAdjust="spacingAndGlyphs">A</text>
<text x="1218.0" y="225.0" font-size="26.09" fill="#6A6A6A" textLength="16.0" lengthAdjust="spacingAndGlyphs">A</text>
<text x="584.6" y="317.6" font-size="42.03" fill="#6A6A6A" font-weight="bold" textLength="27.0" lengthAdjust="spacingAndGlyphs">B</text>
<text x="668" y="317.6" font-size="41" fill="#6A6A6A" font-style="italic" font-family="Liberation Serif" font-weight="bold">I</text>
<text x="735.0" y="317.0" font-size="36.23" fill="#6A6A6A" textLength="29.1" lengthAdjust="spacingAndGlyphs">U</text>
<rect x="737.7" y="320" width="23.6" height="1.6" fill="#6A6A6A"/>
<text x="819.0" y="317.6" font-size="39.13" fill="#B0B0B0" font-weight="bold" textLength="21.1" lengthAdjust="spacingAndGlyphs">S</text>
<text x="816.0" y="315.6" font-size="39.13" fill="#6A6A6A" font-weight="bold" textLength="21.1" lengthAdjust="spacingAndGlyphs">S</text>
<text x="882.8" y="318.8" font-size="28.97" fill="#6A6A6A" textLength="39.7" lengthAdjust="spacingAndGlyphs">abc</text>
<rect x="882" y="309.5" width="41" height="1.4" fill="#6A6A6A"/>
<text x="959.0" y="313.0" font-size="36.52" fill="#6A6A6A" textLength="41.0" lengthAdjust="spacingAndGlyphs">AV</text>
<text x="1045.0" y="317.6" font-size="29.13" fill="#6A6A6A" textLength="33.6" lengthAdjust="spacingAndGlyphs">Aa</text>
<text x="1116.3" y="306.0" font-size="17.93" fill="#6A6A6A" textLength="20.5" lengthAdjust="spacingAndGlyphs">ab</text>
<text x="1212.8" y="318.0" font-size="36.23" fill="#6A6A6A" textLength="23.3" lengthAdjust="spacingAndGlyphs">A</text>
<text x="1387.9" y="209.0" font-size="13.04" fill="#3E7DC1" font-weight="bold" textLength="5.9" lengthAdjust="spacingAndGlyphs">1</text>
<text x="1387.1" y="223.0" font-size="12.86" fill="#3E7DC1" font-weight="bold" textLength="7.4" lengthAdjust="spacingAndGlyphs">2</text>
<text x="1387.3" y="237.2" font-size="13.43" fill="#3E7DC1" font-weight="bold" textLength="7.1" lengthAdjust="spacingAndGlyphs">3</text>
<text x="1731.0" y="196.8" font-size="33.33" fill="#3E7DC1" font-weight="bold" textLength="22.1" lengthAdjust="spacingAndGlyphs">A</text>
<text x="2844.7" y="253.0" font-size="27.59" fill="#7A7A7A" font-weight="bold" textLength="29.3" lengthAdjust="spacingAndGlyphs">ab</text>
<text x="2864.3" y="273.0" font-size="27.78" fill="#7A7A7A" font-weight="bold" textLength="12.5" lengthAdjust="spacingAndGlyphs">a</text>
<text x="2877.1" y="273.0" font-size="27.78" fill="#3E7DC1" font-weight="bold" textLength="12.6" lengthAdjust="spacingAndGlyphs">c</text>
<text x="13.8" y="1671.0" font-size="28.99" fill="#555555" textLength="132.5" lengthAdjust="spacingAndGlyphs">Slide 4 of 4</text>
<text x="256.9" y="1670.0" font-size="28.26" fill="#555555" textLength="267.7" lengthAdjust="spacingAndGlyphs">English (United States)</text>
<text x="2306.4" y="1671.0" font-size="28.99" fill="#555555" textLength="72.2" lengthAdjust="spacingAndGlyphs">Notes</text>
<text x="3060.7" y="1671.0" font-size="28.26" fill="#555555" textLength="52.3" lengthAdjust="spacingAndGlyphs">50%</text>
</g>
</svg></body></html>
